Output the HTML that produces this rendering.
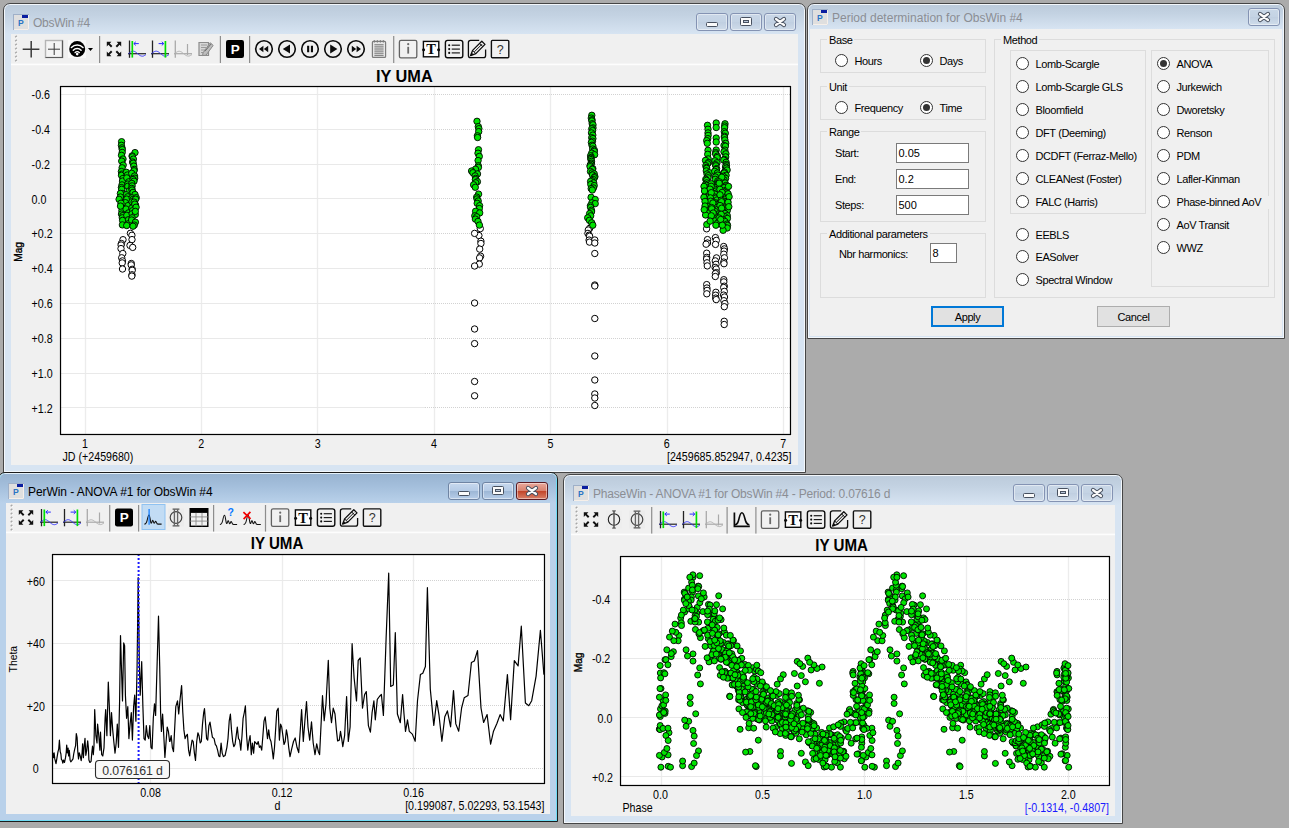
<!DOCTYPE html>
<html lang="en"><head><meta charset="utf-8"><title>Peranso - IY UMA</title>
<style>
html,body{margin:0;padding:0}
body{width:1289px;height:828px;overflow:hidden;background:#ababab;position:relative;font-family:"Liberation Sans",sans-serif;font-size:11px;color:#000}
.a{position:absolute;box-sizing:border-box}
.frame{position:absolute;box-sizing:border-box;border:1px solid #454545;border-radius:7px 7px 0 0}
.frame.in{background:#d7e4f2;box-shadow:inset 0 0 0 1px #f3f7fb}
.frame.ac{background:#b9d1ea;border-color:#1c1c1c;box-shadow:inset 0 1px 0 0 #e4f1fa,inset 0 0 0 1px #6fdcf5}
.cap{position:absolute;border-radius:5px 5px 0 0}
.cap.in{background:linear-gradient(#bccbdb 0%,#c3d2e2 35%,#d7e4f2 100%)}
.cap.ac{background:linear-gradient(#98b3d0 0%,#a3bedb 40%,#b9d1ea 100%)}
.client{position:absolute;background:#f0f0f0}
.title{position:absolute;font-size:12px;line-height:16px;white-space:nowrap;margin-top:1px}
.title.in{color:#8b8e94}
.title.ac{color:#000}
.tbsep{position:absolute;width:1px;background:#8e8e8e}
.tbline{position:absolute;height:1px;background:#fdfdfd}
svg{position:absolute;overflow:visible}
svg text{font-family:"Liberation Sans",sans-serif}
.gb{position:absolute;box-sizing:border-box;border:1px solid #dcdcdc}
.gl{position:absolute;background:#f0f0f0;padding:0 2px 0 2px;line-height:13px;font-size:11px;white-space:nowrap;letter-spacing:-0.4px;margin-top:1px}
.lb{position:absolute;line-height:13px;font-size:11px;white-space:nowrap;letter-spacing:-0.4px;margin-top:1px}
.rd{position:absolute;box-sizing:border-box;width:13px;height:13px;border-radius:50%;border:1px solid #333;background:#fff}
.rd.on::after{content:"";position:absolute;left:2px;top:2px;width:7px;height:7px;border-radius:50%;background:#333}
.inp{position:absolute;box-sizing:border-box;height:20px;border:1px solid #7a7a7a;background:#fff;font-size:11px;line-height:18px;padding-left:1.5px}
.btn{position:absolute;box-sizing:border-box;height:21px;border:1px solid #adadad;background:#e1e1e1;text-align:center;font-size:11px;line-height:21px;letter-spacing:-0.4px}
.btn.def{border:2px solid #0078d7;line-height:19px}
</style></head><body>
<div class="frame in" style="left:3px;top:3px;width:803px;height:470px"></div><div class="cap in" style="left:5px;top:5px;width:799px;height:29px"></div><div class="client" style="left:11px;top:34px;width:787px;height:431px"></div><svg style="left:13px;top:14px" width="16" height="16" viewBox="0 0 16 16"><rect x="0.5" y="0.5" width="15" height="15" fill="#dfdfdf" stroke="#9fb0c8" stroke-width="1"/><path d="M15.5 1v14.5H1" fill="none" stroke="#f6efe9" stroke-width="1"/><rect x="9" y="1" width="6" height="3" fill="#0a1ea0"/><text x="5" y="12" font-size="8.6" font-weight="bold" fill="#2a74c4">P</text></svg><div class="title in" style="left:33px;top:14px;letter-spacing:-0.27px">ObsWin #4</div><div class="a" style="left:696px;top:13px;width:32px;height:18px;border:1px solid #8493b3;border-radius:3px;background:linear-gradient(#c9d7e7 0%,#c4d3e4 48%,#c0cfe1 52%,#cfdcea 100%);box-shadow:inset 0 0 0 1px rgba(255,255,255,.45)"></div><svg style="left:696px;top:13px" width="32" height="18"><rect x="10.5" y="9.5" width="11" height="4" rx="1" fill="#fbfbfb" stroke="#47505f" stroke-width="1"/></svg><div class="a" style="left:730px;top:13px;width:32px;height:18px;border:1px solid #8493b3;border-radius:3px;background:linear-gradient(#c9d7e7 0%,#c4d3e4 48%,#c0cfe1 52%,#cfdcea 100%);box-shadow:inset 0 0 0 1px rgba(255,255,255,.45)"></div><svg style="left:730px;top:13px" width="32" height="18"><rect x="10.5" y="4.5" width="11" height="8" rx="1" fill="#fbfbfb" stroke="#47505f" stroke-width="1"/><rect x="13.5" y="7.5" width="5" height="2" fill="#b9c7da" stroke="#47505f" stroke-width="1"/></svg><div class="a" style="left:764px;top:13px;width:32px;height:18px;border:1px solid #8493b3;border-radius:3px;background:linear-gradient(#c9d7e7 0%,#c4d3e4 48%,#c0cfe1 52%,#cfdcea 100%);box-shadow:inset 0 0 0 1px rgba(255,255,255,.45)"></div><svg style="left:764px;top:13px" width="32" height="18"><path d="M12.0 6.0L20.0 12.0M20.0 6.0L12.0 12.0" stroke="#47505f" stroke-width="4.2" stroke-linecap="round"/><path d="M12.0 6.0L20.0 12.0M20.0 6.0L12.0 12.0" stroke="#fbfbfb" stroke-width="2.2" stroke-linecap="round"/></svg>
<svg style="left:0;top:0" width="1289" height="828" viewBox="0 0 1289 828"><path d="M15.2 37.3L16.8 35.7" stroke="#a6a6a6" stroke-width="1.3"/><path d="M16.2 38.3L17.8 36.7" stroke="#fbfbfb" stroke-width="1"/><path d="M15.2 41.3L16.8 39.7" stroke="#a6a6a6" stroke-width="1.3"/><path d="M16.2 42.3L17.8 40.7" stroke="#fbfbfb" stroke-width="1"/><path d="M15.2 45.3L16.8 43.7" stroke="#a6a6a6" stroke-width="1.3"/><path d="M16.2 46.3L17.8 44.7" stroke="#fbfbfb" stroke-width="1"/><path d="M15.2 49.3L16.8 47.7" stroke="#a6a6a6" stroke-width="1.3"/><path d="M16.2 50.3L17.8 48.7" stroke="#fbfbfb" stroke-width="1"/><path d="M15.2 53.3L16.8 51.7" stroke="#a6a6a6" stroke-width="1.3"/><path d="M16.2 54.3L17.8 52.7" stroke="#fbfbfb" stroke-width="1"/><path d="M15.2 57.3L16.8 55.7" stroke="#a6a6a6" stroke-width="1.3"/><path d="M16.2 58.3L17.8 56.7" stroke="#fbfbfb" stroke-width="1"/><path d="M15.2 61.3L16.8 59.7" stroke="#a6a6a6" stroke-width="1.3"/><path d="M16.2 62.3L17.8 60.7" stroke="#fbfbfb" stroke-width="1"/><g transform="translate(31 49)"><path d="M-8.3 0.2H8.4M0.2 -8V8.4" stroke="#3a3a3a" stroke-width="1.5" fill="none"/></g><g transform="translate(54 49)"><rect x="-8.5" y="-8.5" width="17" height="17" fill="#f4f4f4" stroke="#b4b4b4" stroke-width="1.4"/><path d="M-8.5 8.5H8.5V-8.5" fill="none" stroke="#5a5a5a" stroke-width="1.2"/><path d="M-6 0.2H6M0.2 -6V6" stroke="#3a3a3a" stroke-width="1" fill="none"/></g><g transform="translate(77 49)"><rect x="-9" y="-9" width="18" height="18" fill="#f9f9f9"/><circle cx="0.2" cy="0.1" r="8" fill="#000"/><path d="M-5.6 -1.6A8 8 0 0 1 6 -1.6" fill="none" stroke="#fff" stroke-width="1.5" stroke-linecap="round"/><path d="M-3.7 1.2A5.4 5.4 0 0 1 4.1 1.2" fill="none" stroke="#fff" stroke-width="1.5" stroke-linecap="round"/><path d="M-1.9 3.6A2.8 2.8 0 0 1 2.3 3.6" fill="none" stroke="#fff" stroke-width="1.4" stroke-linecap="round"/><circle cx="0.2" cy="5.1" r="1.3" fill="#fff"/><path d="M11 -1H16L13.5 2Z" fill="#000"/></g><rect x="99.0" y="36" width="1.2" height="27" fill="#8d8d8d"/><g transform="translate(114 49)"><path transform="scale(1 1)" d="M-7.2 -7.2h4.6l-1.6 1.6 2.6 2.6-1.4 1.4-2.6-2.6-1.6 1.6z" fill="#111"/><path transform="scale(-1 1)" d="M-7.2 -7.2h4.6l-1.6 1.6 2.6 2.6-1.4 1.4-2.6-2.6-1.6 1.6z" fill="#111"/><path transform="scale(1 -1)" d="M-7.2 -7.2h4.6l-1.6 1.6 2.6 2.6-1.4 1.4-2.6-2.6-1.6 1.6z" fill="#111"/><path transform="scale(-1 -1)" d="M-7.2 -7.2h4.6l-1.6 1.6 2.6 2.6-1.4 1.4-2.6-2.6-1.6 1.6z" fill="#111"/></g><g transform="translate(137 49)"><path d="M-7.5 -8.5V8.8" stroke="#222" stroke-width="1.3"/><path d="M-9 4.7H9" stroke="#222" stroke-width="1.2"/><path d="M-8.5 4.7 L-7.8 4.1 L-7.0 3.5 L-6.3 3.0 L-5.6 2.6 L-4.9 2.3 L-4.1 2.2 L-3.4 2.2 L-2.7 2.4 L-1.9 2.7 L-1.2 3.2 L-0.5 3.7 L0.2 4.3 L1.0 4.9 L1.7 5.5 L2.4 6.1 L3.2 6.6 L3.9 6.9 L4.6 7.1 L5.4 7.2 L6.1 7.1 L6.8 6.9 L7.5 6.5 L8.3 6.0 L9.0 5.5" fill="none" stroke="#3030ff" stroke-width="0.9"/><path d="M-4.7 -8V8.6" stroke="#00e000" stroke-width="1.7"/><path d="M-3 -5.4H1.8M-3.2 -5.4L-1.2 -7.2M-3.2 -5.4L-1.2 -3.6" stroke="#2828ff" stroke-width="1" fill="none"/></g><g transform="translate(160 49)"><path d="M-7.5 -8.5V8.8" stroke="#222" stroke-width="1.3"/><path d="M-9 4.7H9" stroke="#222" stroke-width="1.2"/><path d="M-8.5 4.7 L-7.8 4.1 L-7.0 3.5 L-6.3 3.0 L-5.6 2.6 L-4.9 2.3 L-4.1 2.2 L-3.4 2.2 L-2.7 2.4 L-1.9 2.7 L-1.2 3.2 L-0.5 3.7 L0.2 4.3 L1.0 4.9 L1.7 5.5 L2.4 6.1 L3.2 6.6 L3.9 6.9 L4.6 7.1 L5.4 7.2 L6.1 7.1 L6.8 6.9 L7.5 6.5 L8.3 6.0 L9.0 5.5" fill="none" stroke="#3030ff" stroke-width="0.9"/><path d="M5.4 -8V8.6" stroke="#00e000" stroke-width="1.7"/><path d="M-1.4 -5.4H3.6M3.8 -5.4L1.8 -7.2M3.8 -5.4L1.8 -3.6" stroke="#2828ff" stroke-width="1" fill="none"/></g><g transform="translate(183 49)"><path d="M-7.7 -8.5V8.8" stroke="#a9a9a9" stroke-width="1.3"/><path d="M-9 4.7H9" stroke="#a9a9a9" stroke-width="1.2"/><path d="M-8.5 4.7 L-7.8 4.1 L-7.0 3.6 L-6.3 3.1 L-5.6 2.7 L-4.9 2.4 L-4.1 2.3 L-3.4 2.3 L-2.7 2.5 L-1.9 2.8 L-1.2 3.2 L-0.5 3.8 L0.2 4.3 L1.0 4.9 L1.7 5.5 L2.4 6.0 L3.2 6.5 L3.9 6.8 L4.6 7.0 L5.4 7.1 L6.1 7.0 L6.8 6.8 L7.5 6.4 L8.3 6.0 L9.0 5.4" fill="none" stroke="#b4b4b4" stroke-width="1"/><path d="M4.5 -5V6" stroke="#a9a9a9" stroke-width="1.2"/></g><g transform="translate(206 49)"><path d="M-7 -6.5H2.5V6.5H-7Z" fill="#d7d7d7" stroke="#8c8c8c" stroke-width="1.2"/><path d="M-5 -4H1M-5 -1.5H0M-5 1H-1M-5 3.5H1" stroke="#9a9a9a" stroke-width="1"/><path d="M-3 3.8L4.2 -6.2L7.2 -3.6L0 6.2L-3.4 6.6Z" fill="#bdbdbd" stroke="#8a8a8a" stroke-width="1"/><path d="M-1 2.2L5.2 -5.2" stroke="#6f6f6f" stroke-width="1"/></g><rect x="219.8" y="36" width="1.2" height="27" fill="#8d8d8d"/><g transform="translate(235 49)"><rect x="-9" y="-9" width="18" height="18" rx="2.2" fill="#000"/><text x="0.2" y="4.9" text-anchor="middle" font-size="13.5" font-weight="bold" fill="#fff">P</text></g><rect x="249.0" y="36" width="1.2" height="27" fill="#8d8d8d"/><g transform="translate(264 49)"><circle cx="0" cy="0" r="8.3" fill="none" stroke="#0c0c0c" stroke-width="1.6"/><path d="M-0.6 -3.2V3.2L-5 0ZM4.2 -3.2V3.2L-0.2 0Z" fill="#0c0c0c"/></g><g transform="translate(287 49)"><circle cx="0" cy="0" r="8.3" fill="none" stroke="#0c0c0c" stroke-width="1.6"/><path d="M3 -4.6V4.6L-4.2 0Z" fill="#0c0c0c"/></g><g transform="translate(310 49)"><circle cx="0" cy="0" r="8.3" fill="none" stroke="#0c0c0c" stroke-width="1.6"/><path d="M-2.9 -3.2h2.1v6.4h-2.1zM0.9 -3.2h2.1v6.4h-2.1z" fill="#0c0c0c"/></g><g transform="translate(333 49)"><circle cx="0" cy="0" r="8.3" fill="none" stroke="#0c0c0c" stroke-width="1.6"/><path d="M-2.8 -4.6V4.6L4.4 0Z" fill="#0c0c0c"/></g><g transform="translate(356 49)"><circle cx="0" cy="0" r="8.3" fill="none" stroke="#0c0c0c" stroke-width="1.6"/><path d="M0.6 -3.2V3.2L5 0ZM-4.2 -3.2V3.2L0.2 0Z" fill="#0c0c0c"/></g><g transform="translate(379 49)"><rect x="-6.6" y="-7.6" width="13.2" height="16" rx="1" fill="#e6e6e6" stroke="#7c7c7c" stroke-width="1.2"/><path d="M-4.6 -8.8V-6.6M-1.6 -8.8V-6.6M1.4 -8.8V-6.6M4.4 -8.8V-6.6" stroke="#7a7a7a" stroke-width="1.3"/><path d="M-4.6 -4.2H4.6" stroke="#6e6e6e" stroke-width="1"/><path d="M-4.6 -2.1H4.6" stroke="#6e6e6e" stroke-width="1"/><path d="M-4.6 0.0H4.6" stroke="#6e6e6e" stroke-width="1"/><path d="M-4.6 2.1H4.6" stroke="#6e6e6e" stroke-width="1"/><path d="M-4.6 4.2H4.6" stroke="#6e6e6e" stroke-width="1"/><path d="M-4.6 6.3H4.6" stroke="#6e6e6e" stroke-width="1"/></g><rect x="393.1" y="36" width="1.2" height="27" fill="#8d8d8d"/><g transform="translate(408 49)"><rect x="-8.6" y="-8.6" width="17.4" height="17.4" rx="1.6" fill="#f1f1f1" stroke="#626262" stroke-width="1.3"/><path d="M0.2 -2.2V4.6" stroke="#6a6a6a" stroke-width="1.8"/><circle cx="0.2" cy="-4.8" r="1.1" fill="#6a6a6a"/></g><g transform="translate(431 49)"><rect x="-7.6" y="-7.6" width="15.4" height="15.4" fill="#fdfdfd" stroke="#0a0a0a" stroke-width="1.4"/><text x="0.1" y="5" text-anchor="middle" font-size="14.5" font-weight="bold" fill="#0a0a0a" style="font-family:'Liberation Serif',serif">T</text><circle cx="-7.4" cy="0.7" r="1.5" fill="#0a0a0a"/><circle cx="7.6" cy="0.7" r="1.5" fill="#0a0a0a"/></g><g transform="translate(454 49)"><rect x="-8.6" y="-8.6" width="17.4" height="17.4" rx="2.2" fill="#f1f1f1" stroke="#0c0c0c" stroke-width="1.4"/><circle cx="-4.8" cy="-3.8" r="1.05" fill="#0c0c0c"/><path d="M-2.3 -3.8H5.9" stroke="#1c1c1c" stroke-width="1.2"/><circle cx="-4.8" cy="0.1" r="1.05" fill="#0c0c0c"/><path d="M-2.3 0.1H5.9" stroke="#1c1c1c" stroke-width="1.2"/><circle cx="-4.8" cy="3.9" r="1.05" fill="#0c0c0c"/><path d="M-2.3 3.9H5.9" stroke="#1c1c1c" stroke-width="1.2"/></g><g transform="translate(477 49)"><path d="M2.2 -8.6H-6.4Q-8.6 -8.6 -8.6 -6.4V6.4Q-8.6 8.6 -6.4 8.6H6.4Q8.6 8.6 8.6 6.4V0.6" fill="none" stroke="#0c0c0c" stroke-width="1.3"/><path d="M-6.4 6.6L-4.4 1.4L4.8 -7.8L8 -4.6L-1.2 4.6Z" fill="#f4f4f4" stroke="#0c0c0c" stroke-width="1.3" stroke-linejoin="round"/><path d="M2.6 -5.6L5.8 -2.4M-4.4 1.4L-1.2 4.6M-2.6 2.8L5 -4.8" stroke="#0c0c0c" stroke-width="1" fill="none"/><path d="M-6.6 6.8L-5.4 3.6L-3.4 5.6Z" fill="#0c0c0c"/></g><g transform="translate(500 49)"><rect x="-8.6" y="-8.6" width="17.4" height="17.4" rx="1" fill="#f1f1f1" stroke="#111" stroke-width="1.4"/><text x="0.2" y="4.6" text-anchor="middle" font-size="12.5" fill="#333">?</text></g><rect x="11" y="63.6" width="787" height="1.6" fill="#fdfdfd"/><text transform="translate(404.3 82) scale(1.02 1)" text-anchor="middle" font-size="16" font-weight="bold" fill="#000" >IY UMA</text><rect x="60" y="86" width="731" height="349" fill="#fff"/><rect x="84.85" y="86" width="1.3" height="348" fill="#ececec"/><rect x="200.85" y="86" width="1.3" height="348" fill="#ececec"/><rect x="316.85" y="86" width="1.3" height="348" fill="#ececec"/><rect x="433.85" y="86" width="1.3" height="348" fill="#ececec"/><rect x="549.85" y="86" width="1.3" height="348" fill="#ececec"/><rect x="666.85" y="86" width="1.3" height="348" fill="#ececec"/><rect x="782.85" y="86" width="1.3" height="348" fill="#ececec"/><rect x="60" y="94" width="365" height="1" fill="#e9e9e9"/><path d="M425 94.5H790" stroke="#d2d2d2" stroke-width="1" stroke-dasharray="1 1" fill="none"/><rect x="60" y="129" width="365" height="1" fill="#e9e9e9"/><path d="M425 129.5H790" stroke="#d2d2d2" stroke-width="1" stroke-dasharray="1 1" fill="none"/><rect x="60" y="164" width="365" height="1" fill="#e9e9e9"/><path d="M425 164.5H790" stroke="#d2d2d2" stroke-width="1" stroke-dasharray="1 1" fill="none"/><rect x="60" y="198" width="365" height="1" fill="#e9e9e9"/><path d="M425 198.5H790" stroke="#d2d2d2" stroke-width="1" stroke-dasharray="1 1" fill="none"/><rect x="60" y="233" width="365" height="1" fill="#e9e9e9"/><path d="M425 233.5H790" stroke="#d2d2d2" stroke-width="1" stroke-dasharray="1 1" fill="none"/><rect x="60" y="268" width="365" height="1" fill="#e9e9e9"/><path d="M425 268.5H790" stroke="#d2d2d2" stroke-width="1" stroke-dasharray="1 1" fill="none"/><rect x="60" y="303" width="365" height="1" fill="#e9e9e9"/><path d="M425 303.5H790" stroke="#d2d2d2" stroke-width="1" stroke-dasharray="1 1" fill="none"/><rect x="60" y="338" width="365" height="1" fill="#e9e9e9"/><path d="M425 338.5H790" stroke="#d2d2d2" stroke-width="1" stroke-dasharray="1 1" fill="none"/><rect x="60" y="373" width="365" height="1" fill="#e9e9e9"/><path d="M425 373.5H790" stroke="#d2d2d2" stroke-width="1" stroke-dasharray="1 1" fill="none"/><rect x="60" y="407" width="365" height="1" fill="#e9e9e9"/><path d="M425 407.5H790" stroke="#d2d2d2" stroke-width="1" stroke-dasharray="1 1" fill="none"/><g fill="#fff" stroke="#000" stroke-width="1"><circle cx="123.0" cy="239.7" r="3.2"/><circle cx="121.4" cy="243.5" r="3.2"/><circle cx="121.1" cy="245.0" r="3.2"/><circle cx="121.0" cy="248.6" r="3.2"/><circle cx="122.8" cy="253.5" r="3.2"/><circle cx="121.7" cy="257.8" r="3.2"/><circle cx="122.5" cy="260.9" r="3.2"/><circle cx="122.2" cy="262.9" r="3.2"/><circle cx="122.5" cy="269.0" r="3.2"/><circle cx="130.4" cy="233.3" r="3.2"/><circle cx="131.9" cy="235.3" r="3.2"/><circle cx="132.0" cy="239.6" r="3.2"/><circle cx="130.0" cy="245.4" r="3.2"/><circle cx="132.7" cy="247.4" r="3.2"/><circle cx="131.3" cy="263.5" r="3.2"/><circle cx="131.2" cy="264.9" r="3.2"/><circle cx="132.2" cy="269.3" r="3.2"/><circle cx="132.2" cy="270.3" r="3.2"/><circle cx="132.0" cy="274.8" r="3.2"/><circle cx="131.8" cy="276.1" r="3.2"/><circle cx="480.3" cy="228.6" r="3.2"/><circle cx="478.9" cy="235.5" r="3.2"/><circle cx="480.9" cy="241.2" r="3.2"/><circle cx="480.9" cy="243.5" r="3.2"/><circle cx="479.7" cy="249.1" r="3.2"/><circle cx="480.6" cy="256.2" r="3.2"/><circle cx="479.6" cy="257.9" r="3.2"/><circle cx="479.3" cy="264.1" r="3.2"/><circle cx="474.6" cy="233.4" r="3.2"/><circle cx="474.6" cy="266.0" r="3.2"/><circle cx="474.6" cy="303.0" r="3.2"/><circle cx="474.6" cy="329.0" r="3.2"/><circle cx="474.6" cy="343.6" r="3.2"/><circle cx="474.6" cy="381.5" r="3.2"/><circle cx="474.6" cy="395.8" r="3.2"/><circle cx="589.7" cy="228.3" r="3.2"/><circle cx="588.3" cy="230.0" r="3.2"/><circle cx="587.9" cy="233.4" r="3.2"/><circle cx="589.1" cy="235.2" r="3.2"/><circle cx="589.6" cy="236.2" r="3.2"/><circle cx="589.1" cy="240.1" r="3.2"/><circle cx="589.5" cy="242.1" r="3.2"/><circle cx="594.8" cy="240.0" r="3.2"/><circle cx="594.8" cy="243.0" r="3.2"/><circle cx="594.8" cy="253.5" r="3.2"/><circle cx="594.8" cy="285.0" r="3.2"/><circle cx="594.8" cy="286.0" r="3.2"/><circle cx="594.8" cy="318.5" r="3.2"/><circle cx="594.8" cy="356.0" r="3.2"/><circle cx="594.8" cy="380.0" r="3.2"/><circle cx="594.8" cy="394.0" r="3.2"/><circle cx="594.8" cy="398.0" r="3.2"/><circle cx="594.8" cy="405.5" r="3.2"/><circle cx="706.6" cy="228.8" r="3.2"/><circle cx="707.5" cy="239.6" r="3.2"/><circle cx="707.5" cy="243.0" r="3.2"/><circle cx="706.1" cy="244.2" r="3.2"/><circle cx="706.7" cy="253.2" r="3.2"/><circle cx="706.7" cy="257.4" r="3.2"/><circle cx="706.6" cy="259.1" r="3.2"/><circle cx="707.0" cy="262.8" r="3.2"/><circle cx="707.3" cy="265.9" r="3.2"/><circle cx="706.7" cy="284.6" r="3.2"/><circle cx="706.9" cy="288.0" r="3.2"/><circle cx="707.1" cy="290.4" r="3.2"/><circle cx="706.8" cy="293.8" r="3.2"/><circle cx="715.4" cy="237.6" r="3.2"/><circle cx="716.3" cy="240.4" r="3.2"/><circle cx="715.5" cy="244.4" r="3.2"/><circle cx="716.5" cy="257.9" r="3.2"/><circle cx="715.3" cy="260.9" r="3.2"/><circle cx="716.0" cy="264.3" r="3.2"/><circle cx="715.2" cy="267.4" r="3.2"/><circle cx="716.2" cy="269.0" r="3.2"/><circle cx="716.4" cy="272.6" r="3.2"/><circle cx="715.4" cy="273.6" r="3.2"/><circle cx="715.3" cy="276.5" r="3.2"/><circle cx="715.9" cy="292.3" r="3.2"/><circle cx="715.6" cy="295.2" r="3.2"/><circle cx="715.7" cy="298.1" r="3.2"/><circle cx="716.2" cy="299.6" r="3.2"/><circle cx="723.7" cy="246.5" r="3.2"/><circle cx="724.4" cy="248.9" r="3.2"/><circle cx="724.1" cy="251.1" r="3.2"/><circle cx="723.8" cy="254.2" r="3.2"/><circle cx="724.4" cy="257.8" r="3.2"/><circle cx="723.8" cy="262.1" r="3.2"/><circle cx="724.0" cy="263.7" r="3.2"/><circle cx="723.8" cy="279.7" r="3.2"/><circle cx="723.8" cy="281.9" r="3.2"/><circle cx="724.3" cy="286.2" r="3.2"/><circle cx="723.7" cy="287.5" r="3.2"/><circle cx="724.3" cy="291.4" r="3.2"/><circle cx="723.6" cy="295.1" r="3.2"/><circle cx="724.5" cy="297.0" r="3.2"/><circle cx="723.9" cy="300.7" r="3.2"/><circle cx="724.9" cy="303.6" r="3.2"/><circle cx="724.3" cy="306.7" r="3.2"/><circle cx="724.2" cy="321.3" r="3.2"/><circle cx="724.2" cy="324.5" r="3.2"/></g><g fill="#00e400" stroke="#000" stroke-width="0.9"><circle cx="121.6" cy="141.7" r="3.2"/><circle cx="121.4" cy="145.3" r="3.2"/><circle cx="122.0" cy="147.9" r="3.2"/><circle cx="122.3" cy="149.6" r="3.2"/><circle cx="122.2" cy="152.4" r="3.2"/><circle cx="121.5" cy="155.3" r="3.2"/><circle cx="123.0" cy="159.0" r="3.2"/><circle cx="121.7" cy="161.1" r="3.2"/><circle cx="123.2" cy="165.1" r="3.2"/><circle cx="122.1" cy="167.8" r="3.2"/><circle cx="121.4" cy="171.5" r="3.2"/><circle cx="121.9" cy="174.1" r="3.2"/><circle cx="121.5" cy="175.3" r="3.2"/><circle cx="122.9" cy="178.5" r="3.2"/><circle cx="122.5" cy="181.1" r="3.2"/><circle cx="122.0" cy="184.9" r="3.2"/><circle cx="121.4" cy="187.6" r="3.2"/><circle cx="121.7" cy="189.3" r="3.2"/><circle cx="122.2" cy="193.5" r="3.2"/><circle cx="122.5" cy="195.5" r="3.2"/><circle cx="121.9" cy="198.7" r="3.2"/><circle cx="122.7" cy="202.3" r="3.2"/><circle cx="122.4" cy="203.9" r="3.2"/><circle cx="123.1" cy="207.4" r="3.2"/><circle cx="121.9" cy="210.7" r="3.2"/><circle cx="121.5" cy="214.1" r="3.2"/><circle cx="122.8" cy="215.6" r="3.2"/><circle cx="122.3" cy="217.8" r="3.2"/><circle cx="122.6" cy="220.4" r="3.2"/><circle cx="122.4" cy="224.9" r="3.2"/><circle cx="126.3" cy="172.3" r="3.2"/><circle cx="127.4" cy="175.0" r="3.2"/><circle cx="126.8" cy="177.9" r="3.2"/><circle cx="128.8" cy="181.8" r="3.2"/><circle cx="127.7" cy="184.1" r="3.2"/><circle cx="127.8" cy="186.3" r="3.2"/><circle cx="129.0" cy="191.0" r="3.2"/><circle cx="126.1" cy="194.7" r="3.2"/><circle cx="127.7" cy="196.8" r="3.2"/><circle cx="126.8" cy="199.1" r="3.2"/><circle cx="125.5" cy="202.7" r="3.2"/><circle cx="128.1" cy="205.6" r="3.2"/><circle cx="126.0" cy="209.0" r="3.2"/><circle cx="128.5" cy="212.9" r="3.2"/><circle cx="126.8" cy="215.3" r="3.2"/><circle cx="128.5" cy="219.7" r="3.2"/><circle cx="128.5" cy="223.7" r="3.2"/><circle cx="126.7" cy="225.5" r="3.2"/><circle cx="135.0" cy="152.6" r="3.2"/><circle cx="132.1" cy="155.9" r="3.2"/><circle cx="132.4" cy="156.8" r="3.2"/><circle cx="133.4" cy="159.1" r="3.2"/><circle cx="132.6" cy="162.0" r="3.2"/><circle cx="133.2" cy="163.2" r="3.2"/><circle cx="133.8" cy="166.1" r="3.2"/><circle cx="134.3" cy="169.4" r="3.2"/><circle cx="134.0" cy="170.8" r="3.2"/><circle cx="131.7" cy="173.3" r="3.2"/><circle cx="134.6" cy="176.0" r="3.2"/><circle cx="134.7" cy="178.2" r="3.2"/><circle cx="133.1" cy="179.5" r="3.2"/><circle cx="134.0" cy="181.2" r="3.2"/><circle cx="131.8" cy="183.4" r="3.2"/><circle cx="132.1" cy="185.9" r="3.2"/><circle cx="131.7" cy="188.4" r="3.2"/><circle cx="132.1" cy="190.0" r="3.2"/><circle cx="133.0" cy="192.4" r="3.2"/><circle cx="135.0" cy="194.5" r="3.2"/><circle cx="132.1" cy="197.8" r="3.2"/><circle cx="132.9" cy="199.4" r="3.2"/><circle cx="132.0" cy="201.8" r="3.2"/><circle cx="135.5" cy="204.9" r="3.2"/><circle cx="133.4" cy="206.5" r="3.2"/><circle cx="131.9" cy="208.0" r="3.2"/><circle cx="132.6" cy="210.7" r="3.2"/><circle cx="132.1" cy="213.8" r="3.2"/><circle cx="135.3" cy="214.6" r="3.2"/><circle cx="132.1" cy="217.8" r="3.2"/><circle cx="131.6" cy="220.0" r="3.2"/><circle cx="135.4" cy="222.2" r="3.2"/><circle cx="134.3" cy="225.1" r="3.2"/><circle cx="133.0" cy="226.2" r="3.2"/><circle cx="120.4" cy="193.4" r="3.2"/><circle cx="120.4" cy="197.0" r="3.2"/><circle cx="119.1" cy="199.3" r="3.2"/><circle cx="121.0" cy="203.2" r="3.2"/><circle cx="120.5" cy="206.1" r="3.2"/><circle cx="136.2" cy="197.7" r="3.2"/><circle cx="135.6" cy="199.2" r="3.2"/><circle cx="134.1" cy="202.1" r="3.2"/><circle cx="134.8" cy="204.1" r="3.2"/><circle cx="136.1" cy="207.2" r="3.2"/><circle cx="135.3" cy="211.4" r="3.2"/><circle cx="477.0" cy="121.3" r="3.2"/><circle cx="478.3" cy="126.6" r="3.2"/><circle cx="478.9" cy="128.7" r="3.2"/><circle cx="478.7" cy="131.6" r="3.2"/><circle cx="477.4" cy="135.8" r="3.2"/><circle cx="477.6" cy="137.5" r="3.2"/><circle cx="478.5" cy="149.7" r="3.2"/><circle cx="478.0" cy="153.2" r="3.2"/><circle cx="479.3" cy="156.4" r="3.2"/><circle cx="478.1" cy="160.5" r="3.2"/><circle cx="478.3" cy="165.8" r="3.2"/><circle cx="478.4" cy="167.4" r="3.2"/><circle cx="475.5" cy="169.2" r="3.2"/><circle cx="471.6" cy="171.0" r="3.2"/><circle cx="472.9" cy="172.7" r="3.2"/><circle cx="477.5" cy="173.9" r="3.2"/><circle cx="475.1" cy="175.9" r="3.2"/><circle cx="475.7" cy="178.4" r="3.2"/><circle cx="475.4" cy="179.6" r="3.2"/><circle cx="477.4" cy="181.7" r="3.2"/><circle cx="475.7" cy="182.8" r="3.2"/><circle cx="473.6" cy="184.8" r="3.2"/><circle cx="475.3" cy="187.3" r="3.2"/><circle cx="478.6" cy="194.1" r="3.2"/><circle cx="476.7" cy="197.1" r="3.2"/><circle cx="477.0" cy="198.9" r="3.2"/><circle cx="478.2" cy="201.0" r="3.2"/><circle cx="477.2" cy="203.3" r="3.2"/><circle cx="479.6" cy="205.7" r="3.2"/><circle cx="479.3" cy="208.5" r="3.2"/><circle cx="475.6" cy="211.3" r="3.2"/><circle cx="479.7" cy="212.9" r="3.2"/><circle cx="474.8" cy="215.8" r="3.2"/><circle cx="476.7" cy="216.8" r="3.2"/><circle cx="475.4" cy="219.1" r="3.2"/><circle cx="478.0" cy="221.4" r="3.2"/><circle cx="479.4" cy="225.1" r="3.2"/><circle cx="591.8" cy="115.3" r="3.2"/><circle cx="591.3" cy="118.1" r="3.2"/><circle cx="592.0" cy="119.8" r="3.2"/><circle cx="591.9" cy="120.9" r="3.2"/><circle cx="592.2" cy="123.7" r="3.2"/><circle cx="593.0" cy="124.8" r="3.2"/><circle cx="593.0" cy="127.9" r="3.2"/><circle cx="591.8" cy="128.8" r="3.2"/><circle cx="592.6" cy="130.6" r="3.2"/><circle cx="591.5" cy="132.9" r="3.2"/><circle cx="592.8" cy="135.1" r="3.2"/><circle cx="591.7" cy="137.7" r="3.2"/><circle cx="592.9" cy="138.6" r="3.2"/><circle cx="592.5" cy="141.2" r="3.2"/><circle cx="591.4" cy="142.4" r="3.2"/><circle cx="592.0" cy="145.2" r="3.2"/><circle cx="592.9" cy="146.2" r="3.2"/><circle cx="592.7" cy="149.0" r="3.2"/><circle cx="594.3" cy="150.1" r="3.2"/><circle cx="594.3" cy="151.4" r="3.2"/><circle cx="591.7" cy="153.2" r="3.2"/><circle cx="594.6" cy="154.7" r="3.2"/><circle cx="590.6" cy="155.8" r="3.2"/><circle cx="591.2" cy="157.4" r="3.2"/><circle cx="590.8" cy="158.3" r="3.2"/><circle cx="591.0" cy="159.6" r="3.2"/><circle cx="591.5" cy="161.3" r="3.2"/><circle cx="591.4" cy="163.1" r="3.2"/><circle cx="590.9" cy="164.2" r="3.2"/><circle cx="590.1" cy="165.4" r="3.2"/><circle cx="590.1" cy="166.7" r="3.2"/><circle cx="592.8" cy="168.6" r="3.2"/><circle cx="592.4" cy="169.3" r="3.2"/><circle cx="590.5" cy="171.5" r="3.2"/><circle cx="592.2" cy="172.8" r="3.2"/><circle cx="594.2" cy="173.8" r="3.2"/><circle cx="592.5" cy="175.0" r="3.2"/><circle cx="594.9" cy="176.7" r="3.2"/><circle cx="594.2" cy="177.7" r="3.2"/><circle cx="593.2" cy="179.5" r="3.2"/><circle cx="591.7" cy="180.5" r="3.2"/><circle cx="590.6" cy="181.5" r="3.2"/><circle cx="593.7" cy="182.9" r="3.2"/><circle cx="590.8" cy="184.4" r="3.2"/><circle cx="594.2" cy="185.6" r="3.2"/><circle cx="593.4" cy="187.9" r="3.2"/><circle cx="591.2" cy="188.6" r="3.2"/><circle cx="592.3" cy="190.0" r="3.2"/><circle cx="591.1" cy="197.3" r="3.2"/><circle cx="595.2" cy="199.5" r="3.2"/><circle cx="591.9" cy="202.8" r="3.2"/><circle cx="595.2" cy="203.6" r="3.2"/><circle cx="590.4" cy="205.8" r="3.2"/><circle cx="590.6" cy="207.4" r="3.2"/><circle cx="591.5" cy="210.2" r="3.2"/><circle cx="591.5" cy="211.8" r="3.2"/><circle cx="589.6" cy="213.6" r="3.2"/><circle cx="590.7" cy="215.8" r="3.2"/><circle cx="587.7" cy="217.8" r="3.2"/><circle cx="589.4" cy="220.3" r="3.2"/><circle cx="591.7" cy="222.8" r="3.2"/><circle cx="592.8" cy="225.2" r="3.2"/><circle cx="707.5" cy="125.3" r="3.2"/><circle cx="708.0" cy="129.2" r="3.2"/><circle cx="708.0" cy="132.9" r="3.2"/><circle cx="708.1" cy="135.4" r="3.2"/><circle cx="707.8" cy="138.6" r="3.2"/><circle cx="706.7" cy="140.6" r="3.2"/><circle cx="707.3" cy="143.3" r="3.2"/><circle cx="708.0" cy="150.3" r="3.2"/><circle cx="707.7" cy="154.3" r="3.2"/><circle cx="708.2" cy="158.9" r="3.2"/><circle cx="705.5" cy="160.4" r="3.2"/><circle cx="708.5" cy="162.5" r="3.2"/><circle cx="707.6" cy="163.8" r="3.2"/><circle cx="705.8" cy="165.7" r="3.2"/><circle cx="706.5" cy="167.5" r="3.2"/><circle cx="706.6" cy="168.3" r="3.2"/><circle cx="706.3" cy="170.9" r="3.2"/><circle cx="709.4" cy="172.7" r="3.2"/><circle cx="707.0" cy="174.0" r="3.2"/><circle cx="708.2" cy="175.7" r="3.2"/><circle cx="708.0" cy="177.8" r="3.2"/><circle cx="705.8" cy="179.3" r="3.2"/><circle cx="706.5" cy="180.4" r="3.2"/><circle cx="706.7" cy="182.9" r="3.2"/><circle cx="705.5" cy="184.4" r="3.2"/><circle cx="706.6" cy="185.4" r="3.2"/><circle cx="708.3" cy="187.9" r="3.2"/><circle cx="706.7" cy="189.6" r="3.2"/><circle cx="707.4" cy="191.1" r="3.2"/><circle cx="706.0" cy="192.8" r="3.2"/><circle cx="706.3" cy="195.0" r="3.2"/><circle cx="709.2" cy="196.9" r="3.2"/><circle cx="707.3" cy="197.3" r="3.2"/><circle cx="709.4" cy="200.1" r="3.2"/><circle cx="706.6" cy="201.3" r="3.2"/><circle cx="709.3" cy="202.6" r="3.2"/><circle cx="707.8" cy="204.3" r="3.2"/><circle cx="707.6" cy="206.0" r="3.2"/><circle cx="706.0" cy="208.8" r="3.2"/><circle cx="707.5" cy="210.3" r="3.2"/><circle cx="708.3" cy="212.1" r="3.2"/><circle cx="709.1" cy="212.9" r="3.2"/><circle cx="705.6" cy="215.0" r="3.2"/><circle cx="706.8" cy="224.5" r="3.2"/><circle cx="716.2" cy="123.0" r="3.2"/><circle cx="716.2" cy="127.5" r="3.2"/><circle cx="716.2" cy="138.0" r="3.2"/><circle cx="716.2" cy="142.0" r="3.2"/><circle cx="716.2" cy="150.0" r="3.2"/><circle cx="715.6" cy="152.6" r="3.2"/><circle cx="715.7" cy="154.0" r="3.2"/><circle cx="717.4" cy="156.2" r="3.2"/><circle cx="717.1" cy="157.6" r="3.2"/><circle cx="714.9" cy="160.8" r="3.2"/><circle cx="717.0" cy="162.8" r="3.2"/><circle cx="715.5" cy="164.7" r="3.2"/><circle cx="715.9" cy="165.8" r="3.2"/><circle cx="716.6" cy="168.6" r="3.2"/><circle cx="716.0" cy="169.5" r="3.2"/><circle cx="714.7" cy="171.3" r="3.2"/><circle cx="717.4" cy="173.0" r="3.2"/><circle cx="717.8" cy="175.1" r="3.2"/><circle cx="715.4" cy="177.0" r="3.2"/><circle cx="715.2" cy="179.3" r="3.2"/><circle cx="717.8" cy="181.0" r="3.2"/><circle cx="717.3" cy="183.6" r="3.2"/><circle cx="717.7" cy="185.2" r="3.2"/><circle cx="716.4" cy="187.5" r="3.2"/><circle cx="714.7" cy="189.1" r="3.2"/><circle cx="716.1" cy="191.0" r="3.2"/><circle cx="716.8" cy="192.9" r="3.2"/><circle cx="714.7" cy="194.1" r="3.2"/><circle cx="714.9" cy="197.0" r="3.2"/><circle cx="715.7" cy="198.2" r="3.2"/><circle cx="717.1" cy="199.9" r="3.2"/><circle cx="715.4" cy="202.8" r="3.2"/><circle cx="715.6" cy="204.2" r="3.2"/><circle cx="715.9" cy="205.9" r="3.2"/><circle cx="715.1" cy="207.3" r="3.2"/><circle cx="717.7" cy="209.2" r="3.2"/><circle cx="715.3" cy="211.6" r="3.2"/><circle cx="718.0" cy="214.1" r="3.2"/><circle cx="715.0" cy="215.3" r="3.2"/><circle cx="714.8" cy="216.8" r="3.2"/><circle cx="714.8" cy="218.9" r="3.2"/><circle cx="715.4" cy="220.7" r="3.2"/><circle cx="717.6" cy="223.1" r="3.2"/><circle cx="715.9" cy="225.2" r="3.2"/><circle cx="725.0" cy="123.8" r="3.2"/><circle cx="724.7" cy="126.0" r="3.2"/><circle cx="724.6" cy="127.7" r="3.2"/><circle cx="724.3" cy="131.7" r="3.2"/><circle cx="725.3" cy="133.2" r="3.2"/><circle cx="724.4" cy="136.2" r="3.2"/><circle cx="724.5" cy="137.4" r="3.2"/><circle cx="724.9" cy="139.9" r="3.2"/><circle cx="725.7" cy="143.3" r="3.2"/><circle cx="724.0" cy="145.4" r="3.2"/><circle cx="725.4" cy="146.2" r="3.2"/><circle cx="724.9" cy="150.1" r="3.2"/><circle cx="724.0" cy="151.8" r="3.2"/><circle cx="725.9" cy="153.8" r="3.2"/><circle cx="725.7" cy="156.9" r="3.2"/><circle cx="724.5" cy="159.5" r="3.2"/><circle cx="723.7" cy="160.1" r="3.2"/><circle cx="726.1" cy="162.3" r="3.2"/><circle cx="726.2" cy="164.4" r="3.2"/><circle cx="726.4" cy="165.7" r="3.2"/><circle cx="725.5" cy="167.0" r="3.2"/><circle cx="726.5" cy="168.1" r="3.2"/><circle cx="727.1" cy="170.0" r="3.2"/><circle cx="724.4" cy="172.1" r="3.2"/><circle cx="724.1" cy="173.1" r="3.2"/><circle cx="726.1" cy="175.3" r="3.2"/><circle cx="723.3" cy="176.3" r="3.2"/><circle cx="725.6" cy="178.4" r="3.2"/><circle cx="724.0" cy="179.9" r="3.2"/><circle cx="723.0" cy="181.8" r="3.2"/><circle cx="725.1" cy="183.0" r="3.2"/><circle cx="725.9" cy="185.4" r="3.2"/><circle cx="725.1" cy="187.0" r="3.2"/><circle cx="724.1" cy="187.7" r="3.2"/><circle cx="726.2" cy="190.3" r="3.2"/><circle cx="723.1" cy="191.1" r="3.2"/><circle cx="726.0" cy="192.9" r="3.2"/><circle cx="724.2" cy="194.4" r="3.2"/><circle cx="727.2" cy="196.4" r="3.2"/><circle cx="723.2" cy="197.4" r="3.2"/><circle cx="724.9" cy="199.2" r="3.2"/><circle cx="723.9" cy="201.2" r="3.2"/><circle cx="726.3" cy="203.0" r="3.2"/><circle cx="723.9" cy="204.2" r="3.2"/><circle cx="724.4" cy="206.4" r="3.2"/><circle cx="724.0" cy="207.9" r="3.2"/><circle cx="726.4" cy="208.7" r="3.2"/><circle cx="727.3" cy="210.4" r="3.2"/><circle cx="723.8" cy="212.3" r="3.2"/><circle cx="724.9" cy="213.5" r="3.2"/><circle cx="727.3" cy="215.7" r="3.2"/><circle cx="724.8" cy="216.7" r="3.2"/><circle cx="727.4" cy="218.4" r="3.2"/><circle cx="723.2" cy="219.9" r="3.2"/><circle cx="724.8" cy="221.4" r="3.2"/><circle cx="727.0" cy="224.1" r="3.2"/><circle cx="727.5" cy="225.5" r="3.2"/><circle cx="724.5" cy="227.4" r="3.2"/><circle cx="727.2" cy="228.0" r="3.2"/><circle cx="723.1" cy="230.3" r="3.2"/><circle cx="711.3" cy="183.8" r="3.2"/><circle cx="711.2" cy="186.3" r="3.2"/><circle cx="710.0" cy="189.1" r="3.2"/><circle cx="711.2" cy="192.7" r="3.2"/><circle cx="710.4" cy="197.9" r="3.2"/><circle cx="710.7" cy="201.2" r="3.2"/><circle cx="712.9" cy="203.0" r="3.2"/><circle cx="711.5" cy="207.5" r="3.2"/><circle cx="711.7" cy="208.8" r="3.2"/><circle cx="713.2" cy="213.0" r="3.2"/><circle cx="711.3" cy="215.8" r="3.2"/><circle cx="710.1" cy="221.1" r="3.2"/><circle cx="721.8" cy="177.2" r="3.2"/><circle cx="719.1" cy="181.8" r="3.2"/><circle cx="719.2" cy="183.2" r="3.2"/><circle cx="719.9" cy="189.3" r="3.2"/><circle cx="722.1" cy="192.4" r="3.2"/><circle cx="720.0" cy="194.8" r="3.2"/><circle cx="721.2" cy="200.2" r="3.2"/><circle cx="721.5" cy="201.7" r="3.2"/><circle cx="720.0" cy="205.5" r="3.2"/><circle cx="721.6" cy="208.2" r="3.2"/><circle cx="721.2" cy="214.3" r="3.2"/><circle cx="719.1" cy="218.0" r="3.2"/><circle cx="720.7" cy="219.5" r="3.2"/><circle cx="722.3" cy="225.2" r="3.2"/><circle cx="704.0" cy="186.4" r="3.2"/><circle cx="704.5" cy="191.0" r="3.2"/><circle cx="703.9" cy="197.3" r="3.2"/><circle cx="705.0" cy="201.4" r="3.2"/><circle cx="705.0" cy="206.0" r="3.2"/><circle cx="704.2" cy="209.7" r="3.2"/><circle cx="728.5" cy="186.4" r="3.2"/><circle cx="728.1" cy="193.8" r="3.2"/><circle cx="729.1" cy="196.7" r="3.2"/><circle cx="728.1" cy="202.3" r="3.2"/><circle cx="728.8" cy="206.7" r="3.2"/></g><rect x="59.5" y="85.5" width="732" height="350" fill="none" stroke="#fafafa" stroke-width="1"/><rect x="60.5" y="86.5" width="730" height="348" fill="none" stroke="#000" stroke-width="1.25"/><text transform="translate(31.6 99.1) scale(0.89 1)" text-anchor="start" font-size="12" font-weight="normal" fill="#000" >-0.6</text><text transform="translate(31.6 133.92999999999998) scale(0.89 1)" text-anchor="start" font-size="12" font-weight="normal" fill="#000" >-0.4</text><text transform="translate(31.6 168.76) scale(0.89 1)" text-anchor="start" font-size="12" font-weight="normal" fill="#000" >-0.2</text><text transform="translate(31.6 203.59) scale(0.89 1)" text-anchor="start" font-size="12" font-weight="normal" fill="#000" >0.0</text><text transform="translate(31.6 238.42) scale(0.89 1)" text-anchor="start" font-size="12" font-weight="normal" fill="#000" >+0.2</text><text transform="translate(31.6 273.25) scale(0.89 1)" text-anchor="start" font-size="12" font-weight="normal" fill="#000" >+0.4</text><text transform="translate(31.6 308.08000000000004) scale(0.89 1)" text-anchor="start" font-size="12" font-weight="normal" fill="#000" >+0.6</text><text transform="translate(31.6 342.91) scale(0.89 1)" text-anchor="start" font-size="12" font-weight="normal" fill="#000" >+0.8</text><text transform="translate(31.6 377.74) scale(0.89 1)" text-anchor="start" font-size="12" font-weight="normal" fill="#000" >+1.0</text><text transform="translate(31.6 412.57) scale(0.89 1)" text-anchor="start" font-size="12" font-weight="normal" fill="#000" >+1.2</text><text transform="translate(84.9 448) scale(0.89 1)" text-anchor="middle" font-size="12" font-weight="normal" fill="#000" >1</text><text transform="translate(201.27999999999997 448) scale(0.89 1)" text-anchor="middle" font-size="12" font-weight="normal" fill="#000" >2</text><text transform="translate(317.65999999999997 448) scale(0.89 1)" text-anchor="middle" font-size="12" font-weight="normal" fill="#000" >3</text><text transform="translate(434.03999999999996 448) scale(0.89 1)" text-anchor="middle" font-size="12" font-weight="normal" fill="#000" >4</text><text transform="translate(550.4200000000001 448) scale(0.89 1)" text-anchor="middle" font-size="12" font-weight="normal" fill="#000" >5</text><text transform="translate(666.8000000000001 448) scale(0.89 1)" text-anchor="middle" font-size="12" font-weight="normal" fill="#000" >6</text><text transform="translate(783.1800000000001 448) scale(0.89 1)" text-anchor="middle" font-size="12" font-weight="normal" fill="#000" >7</text><text transform="translate(62.5 461) scale(0.89 1)" text-anchor="start" font-size="12" font-weight="normal" fill="#000" >JD (+2459680)</text><text transform="translate(791.5 461) scale(0.89 1)" text-anchor="end" font-size="12" font-weight="normal" fill="#000" >[2459685.852947, 0.4235]</text><text transform="translate(22 261.8) rotate(-90)" font-size="10.2" stroke="#000" stroke-width="0.35">Mag</text></svg>
<div class="frame in" style="left:807px;top:3px;width:478px;height:336px"></div><div class="cap in" style="left:809px;top:5px;width:474px;height:24px"></div><div class="client" style="left:810px;top:29px;width:472px;height:307px"></div><svg style="left:812px;top:9px" width="16" height="16" viewBox="0 0 16 16"><rect x="0.5" y="0.5" width="15" height="15" fill="#dfdfdf" stroke="#9fb0c8" stroke-width="1"/><path d="M15.5 1v14.5H1" fill="none" stroke="#f6efe9" stroke-width="1"/><rect x="9" y="1" width="6" height="3" fill="#0a1ea0"/><text x="5" y="12" font-size="8.6" font-weight="bold" fill="#2a74c4">P</text></svg><div class="title in" style="left:832px;top:9px">Period determination for ObsWin #4</div><div class="a" style="left:1248px;top:8px;width:32px;height:18px;border:1px solid #8493b3;border-radius:3px;background:linear-gradient(#c9d7e7 0%,#c4d3e4 48%,#c0cfe1 52%,#cfdcea 100%);box-shadow:inset 0 0 0 1px rgba(255,255,255,.45)"></div><svg style="left:1248px;top:8px" width="32" height="18"><path d="M12.0 6.0L20.0 12.0M20.0 6.0L12.0 12.0" stroke="#47505f" stroke-width="4.2" stroke-linecap="round"/><path d="M12.0 6.0L20.0 12.0M20.0 6.0L12.0 12.0" stroke="#fbfbfb" stroke-width="2.2" stroke-linecap="round"/></svg><div class="gb" style="left:820px;top:39px;width:166px;height:34px"></div><div class="gl" style="left:827px;top:33px">Base</div><div class="rd" style="left:835.0px;top:54.0px"></div><div class="lb" style="left:854.5px;top:54.0px;">Hours</div><div class="rd on" style="left:920.0px;top:54.0px"></div><div class="lb" style="left:939.5px;top:54.0px;">Days</div><div class="gb" style="left:820px;top:86px;width:166px;height:34px"></div><div class="gl" style="left:827px;top:80px">Unit</div><div class="rd" style="left:835.0px;top:101.0px"></div><div class="lb" style="left:854.5px;top:101.0px;">Frequency</div><div class="rd on" style="left:920.0px;top:101.0px"></div><div class="lb" style="left:939.5px;top:101.0px;">Time</div><div class="gb" style="left:820px;top:131px;width:166px;height:91px"></div><div class="gl" style="left:827px;top:125px">Range</div><div class="lb" style="left:835px;top:146px">Start:</div><div class="inp" style="left:896px;top:143px;width:73px">0.05</div><div class="lb" style="left:835px;top:172px">End:</div><div class="inp" style="left:896px;top:169px;width:73px">0.2</div><div class="lb" style="left:835px;top:198px">Steps:</div><div class="inp" style="left:896px;top:195px;width:73px">500</div><div class="gb" style="left:820px;top:233px;width:166px;height:65px"></div><div class="gl" style="left:827px;top:227px">Additional parameters</div><div class="lb" style="left:839px;top:247px">Nbr harmonics:</div><div class="inp" style="left:930px;top:243px;width:27px">8</div><div class="gb" style="left:994px;top:39px;width:281px;height:259px"></div><div class="gl" style="left:1001px;top:33px">Method</div><div class="gb" style="left:1010px;top:50px;width:136px;height:164px"></div><div class="gb" style="left:1151px;top:50px;width:118px;height:237px"></div><div class="rd" style="left:1016.0px;top:57.0px"></div><div class="lb" style="left:1035.5px;top:57.0px;">Lomb-Scargle</div><div class="rd" style="left:1016.0px;top:80.0px"></div><div class="lb" style="left:1035.5px;top:80.0px;">Lomb-Scargle GLS</div><div class="rd" style="left:1016.0px;top:103.0px"></div><div class="lb" style="left:1035.5px;top:103.0px;">Bloomfield</div><div class="rd" style="left:1016.0px;top:126.0px"></div><div class="lb" style="left:1035.5px;top:126.0px;">DFT (Deeming)</div><div class="rd" style="left:1016.0px;top:149.0px"></div><div class="lb" style="left:1035.5px;top:149.0px;">DCDFT (Ferraz-Mello)</div><div class="rd" style="left:1016.0px;top:172.0px"></div><div class="lb" style="left:1035.5px;top:172.0px;">CLEANest (Foster)</div><div class="rd" style="left:1016.0px;top:195.0px"></div><div class="lb" style="left:1035.5px;top:195.0px;">FALC (Harris)</div><div class="rd" style="left:1016.0px;top:228.0px"></div><div class="lb" style="left:1035.5px;top:228.0px;">EEBLS</div><div class="rd" style="left:1016.0px;top:250.0px"></div><div class="lb" style="left:1035.5px;top:250.0px;">EASolver</div><div class="rd" style="left:1016.0px;top:273.0px"></div><div class="lb" style="left:1035.5px;top:273.0px;">Spectral Window</div><div class="rd on" style="left:1157.0px;top:57.0px"></div><div class="lb" style="left:1176.5px;top:57.0px;">ANOVA</div><div class="rd" style="left:1157.0px;top:80.0px"></div><div class="lb" style="left:1176.5px;top:80.0px;">Jurkewich</div><div class="rd" style="left:1157.0px;top:103.0px"></div><div class="lb" style="left:1176.5px;top:103.0px;">Dworetsky</div><div class="rd" style="left:1157.0px;top:126.0px"></div><div class="lb" style="left:1176.5px;top:126.0px;">Renson</div><div class="rd" style="left:1157.0px;top:149.0px"></div><div class="lb" style="left:1176.5px;top:149.0px;">PDM</div><div class="rd" style="left:1157.0px;top:172.0px"></div><div class="lb" style="left:1176.5px;top:172.0px;">Lafler-Kinman</div><div class="rd" style="left:1157.0px;top:195.0px"></div><div class="lb" style="left:1176.5px;top:195.0px;background:#f0f0f0;padding-right:9px;">Phase-binned AoV</div><div class="rd" style="left:1157.0px;top:218.0px"></div><div class="lb" style="left:1176.5px;top:218.0px;">AoV Transit</div><div class="rd" style="left:1157.0px;top:241.0px"></div><div class="lb" style="left:1176.5px;top:241.0px;">WWZ</div><div class="btn def" style="left:931px;top:306px;width:73px">Apply</div><div class="btn" style="left:1097px;top:306px;width:73px">Cancel</div>
<div class="frame ac" style="left:-2px;top:472px;width:560px;height:350px"></div><div class="cap ac" style="left:0px;top:474px;width:556px;height:29px"></div><div class="client" style="left:6px;top:503px;width:544px;height:311px"></div><svg style="left:8px;top:483px" width="16" height="16" viewBox="0 0 16 16"><rect x="0.5" y="0.5" width="15" height="15" fill="#dfdfdf" stroke="#9fb0c8" stroke-width="1"/><path d="M15.5 1v14.5H1" fill="none" stroke="#f6efe9" stroke-width="1"/><rect x="9" y="1" width="6" height="3" fill="#0a1ea0"/><text x="5" y="12" font-size="8.6" font-weight="bold" fill="#2a74c4">P</text></svg><div class="title ac" style="left:28px;top:483px;letter-spacing:-0.065px">PerWin - ANOVA #1 for ObsWin #4</div><div class="a" style="left:448px;top:482px;width:32px;height:18px;border:1px solid #6f84a3;border-radius:3px;background:linear-gradient(#c7d8ee 0%,#b5cbe6 48%,#9db7d6 52%,#b7cde8 100%);box-shadow:inset 0 0 0 1px rgba(255,255,255,.45)"></div><svg style="left:448px;top:482px" width="32" height="18"><rect x="10.5" y="9.5" width="11" height="4" rx="1" fill="#fbfbfb" stroke="#47505f" stroke-width="1"/></svg><div class="a" style="left:482px;top:482px;width:32px;height:18px;border:1px solid #6f84a3;border-radius:3px;background:linear-gradient(#c7d8ee 0%,#b5cbe6 48%,#9db7d6 52%,#b7cde8 100%);box-shadow:inset 0 0 0 1px rgba(255,255,255,.45)"></div><svg style="left:482px;top:482px" width="32" height="18"><rect x="10.5" y="4.5" width="11" height="8" rx="1" fill="#fbfbfb" stroke="#47505f" stroke-width="1"/><rect x="13.5" y="7.5" width="5" height="2" fill="#b9c7da" stroke="#47505f" stroke-width="1"/></svg><div class="a" style="left:516px;top:482px;width:32px;height:18px;border:1px solid #5a1a22;border-radius:3px;background:linear-gradient(#e9a99c 0%,#d9826f 48%,#c2452a 52%,#d98068 100%);box-shadow:inset 0 0 0 1px rgba(255,255,255,.45)"></div><svg style="left:516px;top:482px" width="32" height="18"><path d="M12.0 6.0L20.0 12.0M20.0 6.0L12.0 12.0" stroke="#47505f" stroke-width="4.2" stroke-linecap="round"/><path d="M12.0 6.0L20.0 12.0M20.0 6.0L12.0 12.0" stroke="#fbfbfb" stroke-width="2.2" stroke-linecap="round"/></svg><svg style="left:0;top:0" width="1289" height="828" viewBox="0 0 1289 828"><path d="M10.7 506.3L12.3 504.7" stroke="#a6a6a6" stroke-width="1.3"/><path d="M11.7 507.3L13.3 505.7" stroke="#fbfbfb" stroke-width="1"/><path d="M10.7 510.3L12.3 508.7" stroke="#a6a6a6" stroke-width="1.3"/><path d="M11.7 511.3L13.3 509.7" stroke="#fbfbfb" stroke-width="1"/><path d="M10.7 514.3L12.3 512.7" stroke="#a6a6a6" stroke-width="1.3"/><path d="M11.7 515.3L13.3 513.7" stroke="#fbfbfb" stroke-width="1"/><path d="M10.7 518.3L12.3 516.7" stroke="#a6a6a6" stroke-width="1.3"/><path d="M11.7 519.3L13.3 517.7" stroke="#fbfbfb" stroke-width="1"/><path d="M10.7 522.3L12.3 520.7" stroke="#a6a6a6" stroke-width="1.3"/><path d="M11.7 523.3L13.3 521.7" stroke="#fbfbfb" stroke-width="1"/><path d="M10.7 526.3L12.3 524.7" stroke="#a6a6a6" stroke-width="1.3"/><path d="M11.7 527.3L13.3 525.7" stroke="#fbfbfb" stroke-width="1"/><path d="M10.7 530.3L12.3 528.7" stroke="#a6a6a6" stroke-width="1.3"/><path d="M11.7 531.3L13.3 529.7" stroke="#fbfbfb" stroke-width="1"/><g transform="translate(26 517.5)"><path transform="scale(1 1)" d="M-7.2 -7.2h4.6l-1.6 1.6 2.6 2.6-1.4 1.4-2.6-2.6-1.6 1.6z" fill="#111"/><path transform="scale(-1 1)" d="M-7.2 -7.2h4.6l-1.6 1.6 2.6 2.6-1.4 1.4-2.6-2.6-1.6 1.6z" fill="#111"/><path transform="scale(1 -1)" d="M-7.2 -7.2h4.6l-1.6 1.6 2.6 2.6-1.4 1.4-2.6-2.6-1.6 1.6z" fill="#111"/><path transform="scale(-1 -1)" d="M-7.2 -7.2h4.6l-1.6 1.6 2.6 2.6-1.4 1.4-2.6-2.6-1.6 1.6z" fill="#111"/></g><g transform="translate(49 517.5)"><path d="M-7.5 -8.5V8.8" stroke="#222" stroke-width="1.3"/><path d="M-9 4.7H9" stroke="#222" stroke-width="1.2"/><path d="M-8.5 4.7 L-7.8 4.1 L-7.0 3.5 L-6.3 3.0 L-5.6 2.6 L-4.9 2.3 L-4.1 2.2 L-3.4 2.2 L-2.7 2.4 L-1.9 2.7 L-1.2 3.2 L-0.5 3.7 L0.2 4.3 L1.0 4.9 L1.7 5.5 L2.4 6.1 L3.2 6.6 L3.9 6.9 L4.6 7.1 L5.4 7.2 L6.1 7.1 L6.8 6.9 L7.5 6.5 L8.3 6.0 L9.0 5.5" fill="none" stroke="#3030ff" stroke-width="0.9"/><path d="M-4.7 -8V8.6" stroke="#00e000" stroke-width="1.7"/><path d="M-3 -5.4H1.8M-3.2 -5.4L-1.2 -7.2M-3.2 -5.4L-1.2 -3.6" stroke="#2828ff" stroke-width="1" fill="none"/></g><g transform="translate(72 517.5)"><path d="M-7.5 -8.5V8.8" stroke="#222" stroke-width="1.3"/><path d="M-9 4.7H9" stroke="#222" stroke-width="1.2"/><path d="M-8.5 4.7 L-7.8 4.1 L-7.0 3.5 L-6.3 3.0 L-5.6 2.6 L-4.9 2.3 L-4.1 2.2 L-3.4 2.2 L-2.7 2.4 L-1.9 2.7 L-1.2 3.2 L-0.5 3.7 L0.2 4.3 L1.0 4.9 L1.7 5.5 L2.4 6.1 L3.2 6.6 L3.9 6.9 L4.6 7.1 L5.4 7.2 L6.1 7.1 L6.8 6.9 L7.5 6.5 L8.3 6.0 L9.0 5.5" fill="none" stroke="#3030ff" stroke-width="0.9"/><path d="M5.4 -8V8.6" stroke="#00e000" stroke-width="1.7"/><path d="M-1.4 -5.4H3.6M3.8 -5.4L1.8 -7.2M3.8 -5.4L1.8 -3.6" stroke="#2828ff" stroke-width="1" fill="none"/></g><g transform="translate(95 517.5)"><path d="M-7.7 -8.5V8.8" stroke="#a9a9a9" stroke-width="1.3"/><path d="M-9 4.7H9" stroke="#a9a9a9" stroke-width="1.2"/><path d="M-8.5 4.7 L-7.8 4.1 L-7.0 3.6 L-6.3 3.1 L-5.6 2.7 L-4.9 2.4 L-4.1 2.3 L-3.4 2.3 L-2.7 2.5 L-1.9 2.8 L-1.2 3.2 L-0.5 3.8 L0.2 4.3 L1.0 4.9 L1.7 5.5 L2.4 6.0 L3.2 6.5 L3.9 6.8 L4.6 7.0 L5.4 7.1 L6.1 7.0 L6.8 6.8 L7.5 6.4 L8.3 6.0 L9.0 5.4" fill="none" stroke="#b4b4b4" stroke-width="1"/><path d="M4.5 -5V6" stroke="#a9a9a9" stroke-width="1.2"/></g><rect x="109.1" y="505" width="1.2" height="27" fill="#8d8d8d"/><g transform="translate(124 517.5)"><rect x="-9" y="-9" width="18" height="18" rx="2.2" fill="#000"/><text x="0.2" y="4.9" text-anchor="middle" font-size="13.5" font-weight="bold" fill="#fff">P</text></g><rect x="138.0" y="505" width="1.2" height="27" fill="#8d8d8d"/><rect x="142" y="504.5" width="23" height="25" fill="#c2dcf4" stroke="#8fc2f1" stroke-width="1"/><g transform="translate(153 517.5)"><path d="M-8.6 6.6C-6.8 6.6 -6.4 5.2 -5.8 2.6C-5.2 -0.6 -4.8 -2.6 -4 -2.6C-3.2 -2.6 -3 1.6 -2.2 5C-1.8 6.4 -1.2 5.4 -0.8 3.6C-0.4 2.4 0 2.6 0.4 4.2C0.8 6 1.4 6.4 2 4.6C2.4 3.4 3 3.4 3.4 4.8C3.8 6.2 4.6 6.8 5.4 6.6H8.6" fill="none" stroke="#111" stroke-width="1.05"/><path d="M-3.9 -8.4V7.2" stroke="#0a78ff" stroke-width="1.2"/></g><g transform="translate(176 517.5)"><rect x="-8" y="-9" width="16" height="18" fill="#ececec"/><circle cx="0" cy="0" r="5.8" fill="none" stroke="#444" stroke-width="1.2"/><path d="M-1.6 -8V8M1.6 -8V8" stroke="#666" stroke-width="1.3"/><path d="M-3.4 -8.4H3.4M-3.4 8.4H3.4" stroke="#555" stroke-width="1.1"/></g><g transform="translate(199 517.5)"><rect x="-8.8" y="-8.8" width="17.6" height="17.6" fill="#f2f2f2" stroke="#000" stroke-width="1.4"/><rect x="-8.8" y="-8.8" width="17.6" height="4.2" fill="#000"/><path d="M-8.8 -0.6H8.8M-8.8 3.6H8.8M-3 -4.6V8.8M3 -4.6V8.8" stroke="#8a8a8a" stroke-width="0.9"/></g><rect x="213.0" y="505" width="1.2" height="27" fill="#8d8d8d"/><g transform="translate(228 517.5)"><path transform="translate(0.5 0.4)" d="M-8.6 6.6C-6.8 6.6 -6.4 5.2 -5.8 2.6C-5.2 -0.6 -4.8 -2.6 -4 -2.6C-3.2 -2.6 -3 1.6 -2.2 5C-1.8 6.4 -1.2 5.4 -0.8 3.6C-0.4 2.4 0 2.6 0.4 4.2C0.8 6 1.4 6.4 2 4.6C2.4 3.4 3 3.4 3.4 4.8C3.8 6.2 4.6 6.8 5.4 6.6H8.6" fill="none" stroke="#111" stroke-width="1.05"/><text x="2.6" y="-1.2" text-anchor="middle" font-size="10.5" font-weight="bold" fill="#0a78ff">?</text></g><g transform="translate(251 517.5)"><path transform="translate(1.2 0.4)" d="M-8.6 6.6C-6.8 6.6 -6.4 5.2 -5.8 2.6C-5.2 -0.6 -4.8 -2.6 -4 -2.6C-3.2 -2.6 -3 1.6 -2.2 5C-1.8 6.4 -1.2 5.4 -0.8 3.6C-0.4 2.4 0 2.6 0.4 4.2C0.8 6 1.4 6.4 2 4.6C2.4 3.4 3 3.4 3.4 4.8C3.8 6.2 4.6 6.8 5.4 6.6H8.6" fill="none" stroke="#111" stroke-width="1.05"/><path d="M-7.6 -5.4L-0.4 1.4M-0.6 -5.6L-7.4 1.6" stroke="#f00000" stroke-width="1.7"/></g><rect x="264.9" y="505" width="1.2" height="27" fill="#8d8d8d"/><g transform="translate(280 517.5)"><rect x="-8.6" y="-8.6" width="17.4" height="17.4" rx="1.6" fill="#f1f1f1" stroke="#626262" stroke-width="1.3"/><path d="M0.2 -2.2V4.6" stroke="#6a6a6a" stroke-width="1.8"/><circle cx="0.2" cy="-4.8" r="1.1" fill="#6a6a6a"/></g><g transform="translate(303 517.5)"><rect x="-7.6" y="-7.6" width="15.4" height="15.4" fill="#fdfdfd" stroke="#0a0a0a" stroke-width="1.4"/><text x="0.1" y="5" text-anchor="middle" font-size="14.5" font-weight="bold" fill="#0a0a0a" style="font-family:'Liberation Serif',serif">T</text><circle cx="-7.4" cy="0.7" r="1.5" fill="#0a0a0a"/><circle cx="7.6" cy="0.7" r="1.5" fill="#0a0a0a"/></g><g transform="translate(326 517.5)"><rect x="-8.6" y="-8.6" width="17.4" height="17.4" rx="2.2" fill="#f1f1f1" stroke="#0c0c0c" stroke-width="1.4"/><circle cx="-4.8" cy="-3.8" r="1.05" fill="#0c0c0c"/><path d="M-2.3 -3.8H5.9" stroke="#1c1c1c" stroke-width="1.2"/><circle cx="-4.8" cy="0.1" r="1.05" fill="#0c0c0c"/><path d="M-2.3 0.1H5.9" stroke="#1c1c1c" stroke-width="1.2"/><circle cx="-4.8" cy="3.9" r="1.05" fill="#0c0c0c"/><path d="M-2.3 3.9H5.9" stroke="#1c1c1c" stroke-width="1.2"/></g><g transform="translate(349 517.5)"><path d="M2.2 -8.6H-6.4Q-8.6 -8.6 -8.6 -6.4V6.4Q-8.6 8.6 -6.4 8.6H6.4Q8.6 8.6 8.6 6.4V0.6" fill="none" stroke="#0c0c0c" stroke-width="1.3"/><path d="M-6.4 6.6L-4.4 1.4L4.8 -7.8L8 -4.6L-1.2 4.6Z" fill="#f4f4f4" stroke="#0c0c0c" stroke-width="1.3" stroke-linejoin="round"/><path d="M2.6 -5.6L5.8 -2.4M-4.4 1.4L-1.2 4.6M-2.6 2.8L5 -4.8" stroke="#0c0c0c" stroke-width="1" fill="none"/><path d="M-6.6 6.8L-5.4 3.6L-3.4 5.6Z" fill="#0c0c0c"/></g><g transform="translate(372 517.5)"><rect x="-8.6" y="-8.6" width="17.4" height="17.4" rx="1" fill="#f1f1f1" stroke="#111" stroke-width="1.4"/><text x="0.2" y="4.6" text-anchor="middle" font-size="12.5" fill="#333">?</text></g><rect x="6" y="531.6" width="544" height="1.6" fill="#fdfdfd"/><text transform="translate(277 549) scale(0.945 1)" text-anchor="middle" font-size="16" font-weight="bold" fill="#000" >IY UMA</text><rect x="52" y="554" width="493" height="230" fill="#fff"/><rect x="149.85" y="554" width="1.3" height="229" fill="#ececec"/><rect x="281.85" y="554" width="1.3" height="229" fill="#ececec"/><rect x="412.85" y="554" width="1.3" height="229" fill="#ececec"/><rect x="52" y="580" width="246" height="1" fill="#e9e9e9"/><path d="M298 580.5H544" stroke="#d2d2d2" stroke-width="1" stroke-dasharray="1 1" fill="none"/><rect x="52" y="643" width="246" height="1" fill="#e9e9e9"/><path d="M298 643.5H544" stroke="#d2d2d2" stroke-width="1" stroke-dasharray="1 1" fill="none"/><rect x="52" y="705" width="246" height="1" fill="#e9e9e9"/><path d="M298 705.5H544" stroke="#d2d2d2" stroke-width="1" stroke-dasharray="1 1" fill="none"/><rect x="52" y="768" width="246" height="1" fill="#e9e9e9"/><path d="M298 768.5H544" stroke="#d2d2d2" stroke-width="1" stroke-dasharray="1 1" fill="none"/><path d="M52.7 752.8 L53.4 757.7 L54.1 752.8 L54.8 758.9 L56.0 763.7 L57.0 757.7 L58.0 751.6 L58.7 749.2 L59.4 740.2 L60.2 751.6 L60.9 754.0 L61.4 759.5 L62.1 760.1 L62.8 763.1 L63.5 760.1 L64.5 762.5 L65.5 757.7 L66.2 752.8 L66.7 745.0 L67.4 752.8 L68.1 748.0 L68.6 755.9 L69.3 750.4 L70.1 760.1 L70.8 761.9 L71.8 760.7 L73.0 758.9 L73.7 754.0 L74.7 749.2 L75.6 745.6 L76.3 733.5 L77.1 737.7 L77.8 751.6 L78.5 758.9 L79.2 752.8 L80.2 755.9 L81.2 760.7 L82.1 752.8 L82.6 743.8 L83.4 757.7 L84.1 746.8 L85.0 738.3 L85.8 755.3 L86.7 750.4 L87.7 740.8 L88.4 748.0 L88.9 760.1 L89.9 762.5 L91.1 761.3 L91.8 752.8 L92.5 746.2 L93.3 754.7 L94.0 745.6 L94.7 709.6 L95.9 735.7 L97.0 743.0 L97.6 724.1 L98.8 735.7 L99.9 750.2 L100.5 732.2 L101.7 754.6 L102.8 756.0 L104.0 747.9 L105.1 718.3 L105.7 709.6 L106.9 735.7 L108.3 682.0 L109.8 718.3 L110.4 735.7 L111.5 712.5 L112.7 729.9 L113.8 741.5 L115.0 753.1 L116.2 743.0 L117.3 724.1 L118.5 747.3 L119.6 700.9 L120.5 635.6 L121.4 666.1 L122.5 700.9 L123.7 642.9 L124.6 645.8 L125.4 695.1 L126.6 718.3 L127.8 706.7 L128.9 738.6 L130.1 724.1 L131.3 712.5 L132.4 740.1 L133.6 706.7 L134.7 695.1 L135.9 721.2 L137.1 666.1 L138.2 577.6 L139.4 666.1 L140.2 695.1 L141.7 661.7 L142.9 706.7 L144.0 738.6 L145.2 740.1 L146.3 725.6 L147.5 735.7 L148.7 738.6 L149.8 725.6 L151.0 747.3 L152.1 748.8 L153.3 718.3 L154.5 703.8 L155.6 715.4 L156.8 674.8 L158.5 616.2 L159.7 666.1 L160.6 712.5 L161.4 731.4 L162.6 714.0 L163.8 735.7 L164.9 757.5 L166.1 741.5 L167.2 727.0 L168.4 731.4 L169.6 741.5 L170.0 741.5 L171.2 735.7 L172.3 747.3 L173.5 751.7 L174.6 729.9 L175.8 706.7 L177.5 700.9 L178.7 714.0 L179.9 700.9 L181.6 685.5 L182.8 712.5 L183.9 729.9 L185.1 738.6 L186.3 735.7 L187.4 734.3 L188.6 750.2 L189.7 756.0 L190.9 747.3 L192.1 740.1 L193.2 741.5 L194.4 753.1 L195.5 760.4 L196.7 741.5 L197.9 732.8 L199.0 735.7 L200.2 743.0 L201.3 741.5 L202.5 724.1 L203.7 712.5 L204.5 708.7 L205.4 721.2 L206.6 738.6 L207.7 740.1 L208.9 725.6 L210.0 722.1 L211.2 729.9 L212.4 737.2 L214.1 738.6 L215.3 744.4 L216.4 745.9 L217.6 750.2 L218.8 756.0 L219.9 756.6 L221.1 743.0 L222.2 753.1 L223.4 756.6 L225.1 755.5 L226.9 747.3 L228.0 738.6 L229.2 721.2 L230.4 714.0 L231.5 729.9 L232.7 741.5 L233.8 746.7 L235.0 744.4 L236.2 735.7 L237.3 727.0 L238.5 738.6 L239.6 740.1 L240.8 750.2 L242.0 735.7 L243.1 718.3 L244.3 712.5 L245.4 705.8 L246.6 735.7 L247.8 750.2 L248.9 741.5 L250.1 735.7 L251.3 754.6 L252.4 743.0 L253.6 753.1 L254.7 741.5 L255.9 743.0 L257.1 744.4 L258.2 741.5 L259.4 747.3 L260.5 745.9 L261.7 750.2 L262.9 735.7 L264.0 721.2 L265.2 716.9 L266.3 727.0 L267.5 738.6 L268.7 729.9 L269.8 738.6 L271.0 741.5 L272.1 748.8 L273.3 758.9 L274.5 747.3 L275.6 729.9 L276.8 711.1 L278.2 708.2 L279.4 740.1 L280.6 724.1 L281.7 727.0 L282.9 735.7 L284.0 744.4 L285.2 741.5 L286.4 729.9 L287.5 735.7 L288.7 747.3 L290.0 756.6 L291.7 748.8 L293.5 741.5 L295.2 738.0 L297.0 747.3 L298.7 752.6 L299.9 735.7 L301.6 709.6 L303.3 741.5 L305.1 718.3 L306.5 701.5 L308.0 727.0 L309.7 740.1 L311.5 721.8 L313.2 743.0 L315.0 754.6 L316.7 743.8 L318.4 751.7 L319.6 754.6 L320.8 729.9 L322.5 695.7 L324.2 720.6 L326.0 703.8 L328.3 660.3 L329.8 708.2 L331.5 722.7 L333.2 708.2 L335.0 714.0 L336.4 729.9 L337.6 740.9 L339.3 740.1 L340.5 731.4 L341.7 738.6 L342.8 746.7 L344.6 735.7 L346.6 696.5 L348.3 741.5 L350.1 727.0 L352.1 643.7 L354.1 677.7 L356.5 700.9 L358.2 660.3 L360.2 658.0 L362.5 708.2 L364.6 694.5 L366.3 691.6 L368.4 725.6 L370.4 732.2 L372.1 712.5 L373.9 700.9 L375.3 719.8 L377.3 699.4 L379.4 696.5 L381.4 694.5 L383.4 715.4 L386.1 638.5 L388.7 573.2 L390.7 686.4 L393.3 684.9 L395.3 632.7 L397.4 714.0 L398.8 718.3 L400.3 722.7 L402.6 694.5 L404.0 714.0 L405.5 731.4 L407.5 719.8 L409.3 731.4 L412.3 734.1 L415.2 741.3 L417.5 700.7 L420.4 674.6 L422.8 673.2 L425.4 666.5 L427.4 587.7 L430.3 689.1 L433.8 725.4 L436.7 700.7 L439.0 715.2 L441.9 741.3 L444.8 716.7 L447.4 710.9 L450.6 726.8 L453.5 690.6 L455.8 723.9 L458.7 731.2 L461.6 708.0 L464.2 697.8 L468.0 695.5 L471.4 662.5 L474.3 661.0 L477.5 650.6 L481.0 708.0 L483.6 722.5 L487.1 714.6 L490.6 744.2 L493.5 731.2 L497.0 723.3 L500.1 714.6 L503.3 721.0 L507.4 674.6 L510.6 719.6 L514.3 660.7 L518.1 665.9 L521.3 626.2 L525.4 703.0 L528.8 705.7 L531.7 700.7 L536.1 676.1 L540.4 630.3 L543.9 674.6" fill="none" stroke="#000" stroke-width="1.2" stroke-linejoin="round"/><path d="M138.6 554V784" stroke="#1c1cff" stroke-width="2" stroke-dasharray="2 2" fill="none"/><rect x="51.5" y="553.5" width="494" height="231" fill="none" stroke="#fafafa" stroke-width="1"/><rect x="52.5" y="554.5" width="492" height="229" fill="none" stroke="#000" stroke-width="1.25"/><rect x="95.5" y="760.5" width="74" height="18" rx="3.5" fill="#f8f8f8" fill-opacity="0.93" stroke="#2c2c2c" stroke-width="1.1"/><text x="132.5" y="775" text-anchor="middle" font-size="12.3" font-weight="normal" fill="#333" textLength="60.5" lengthAdjust="spacing">0.076161 d</text><text transform="translate(26.8 585.5) scale(0.89 1)" text-anchor="start" font-size="12" font-weight="normal" fill="#000" >+60</text><text transform="translate(26.8 648.0) scale(0.89 1)" text-anchor="start" font-size="12" font-weight="normal" fill="#000" >+40</text><text transform="translate(26.8 710.5) scale(0.89 1)" text-anchor="start" font-size="12" font-weight="normal" fill="#000" >+20</text><text transform="translate(32.7 773.1) scale(0.89 1)" text-anchor="start" font-size="12" font-weight="normal" fill="#000" >0</text><text transform="translate(150.6 797) scale(0.89 1)" text-anchor="middle" font-size="12" font-weight="normal" fill="#000" >0.08</text><text transform="translate(282.1 797) scale(0.89 1)" text-anchor="middle" font-size="12" font-weight="normal" fill="#000" >0.12</text><text transform="translate(413.6 797) scale(0.89 1)" text-anchor="middle" font-size="12" font-weight="normal" fill="#000" >0.16</text><text transform="translate(277.5 810) scale(0.89 1)" text-anchor="middle" font-size="12" font-weight="normal" fill="#000" >d</text><text transform="translate(544.5 810) scale(0.89 1)" text-anchor="end" font-size="12" font-weight="normal" fill="#000" >[0.199087, 5.02293, 53.1543]</text><text transform="translate(16.6 672.4) rotate(-90) scale(0.9 1)" font-size="11.5">Theta</text></svg>
<div class="frame in" style="left:563px;top:474px;width:560px;height:350px"></div><div class="cap in" style="left:565px;top:476px;width:556px;height:29px"></div><div class="client" style="left:571px;top:505px;width:544px;height:311px"></div><svg style="left:573px;top:485px" width="16" height="16" viewBox="0 0 16 16"><rect x="0.5" y="0.5" width="15" height="15" fill="#dfdfdf" stroke="#9fb0c8" stroke-width="1"/><path d="M15.5 1v14.5H1" fill="none" stroke="#f6efe9" stroke-width="1"/><rect x="9" y="1" width="6" height="3" fill="#0a1ea0"/><text x="5" y="12" font-size="8.6" font-weight="bold" fill="#2a74c4">P</text></svg><div class="title in" style="left:593px;top:485px;letter-spacing:-0.19px">PhaseWin - ANOVA #1 for ObsWin #4 - Period: 0.07616 d</div><div class="a" style="left:1013px;top:484px;width:32px;height:18px;border:1px solid #8493b3;border-radius:3px;background:linear-gradient(#c9d7e7 0%,#c4d3e4 48%,#c0cfe1 52%,#cfdcea 100%);box-shadow:inset 0 0 0 1px rgba(255,255,255,.45)"></div><svg style="left:1013px;top:484px" width="32" height="18"><rect x="10.5" y="9.5" width="11" height="4" rx="1" fill="#fbfbfb" stroke="#47505f" stroke-width="1"/></svg><div class="a" style="left:1047px;top:484px;width:32px;height:18px;border:1px solid #8493b3;border-radius:3px;background:linear-gradient(#c9d7e7 0%,#c4d3e4 48%,#c0cfe1 52%,#cfdcea 100%);box-shadow:inset 0 0 0 1px rgba(255,255,255,.45)"></div><svg style="left:1047px;top:484px" width="32" height="18"><rect x="10.5" y="4.5" width="11" height="8" rx="1" fill="#fbfbfb" stroke="#47505f" stroke-width="1"/><rect x="13.5" y="7.5" width="5" height="2" fill="#b9c7da" stroke="#47505f" stroke-width="1"/></svg><div class="a" style="left:1081px;top:484px;width:32px;height:18px;border:1px solid #8493b3;border-radius:3px;background:linear-gradient(#c9d7e7 0%,#c4d3e4 48%,#c0cfe1 52%,#cfdcea 100%);box-shadow:inset 0 0 0 1px rgba(255,255,255,.45)"></div><svg style="left:1081px;top:484px" width="32" height="18"><path d="M12.0 6.0L20.0 12.0M20.0 6.0L12.0 12.0" stroke="#47505f" stroke-width="4.2" stroke-linecap="round"/><path d="M12.0 6.0L20.0 12.0M20.0 6.0L12.0 12.0" stroke="#fbfbfb" stroke-width="2.2" stroke-linecap="round"/></svg><svg style="left:0;top:0" width="1289" height="828" viewBox="0 0 1289 828"><path d="M575.7 508.3L577.3 506.7" stroke="#a6a6a6" stroke-width="1.3"/><path d="M576.7 509.3L578.3 507.7" stroke="#fbfbfb" stroke-width="1"/><path d="M575.7 512.3L577.3 510.7" stroke="#a6a6a6" stroke-width="1.3"/><path d="M576.7 513.3L578.3 511.7" stroke="#fbfbfb" stroke-width="1"/><path d="M575.7 516.3L577.3 514.7" stroke="#a6a6a6" stroke-width="1.3"/><path d="M576.7 517.3L578.3 515.7" stroke="#fbfbfb" stroke-width="1"/><path d="M575.7 520.3L577.3 518.7" stroke="#a6a6a6" stroke-width="1.3"/><path d="M576.7 521.3L578.3 519.7" stroke="#fbfbfb" stroke-width="1"/><path d="M575.7 524.3L577.3 522.7" stroke="#a6a6a6" stroke-width="1.3"/><path d="M576.7 525.3L578.3 523.7" stroke="#fbfbfb" stroke-width="1"/><path d="M575.7 528.3L577.3 526.7" stroke="#a6a6a6" stroke-width="1.3"/><path d="M576.7 529.3L578.3 527.7" stroke="#fbfbfb" stroke-width="1"/><path d="M575.7 532.3L577.3 530.7" stroke="#a6a6a6" stroke-width="1.3"/><path d="M576.7 533.3L578.3 531.7" stroke="#fbfbfb" stroke-width="1"/><g transform="translate(591 519.5)"><path transform="scale(1 1)" d="M-7.2 -7.2h4.6l-1.6 1.6 2.6 2.6-1.4 1.4-2.6-2.6-1.6 1.6z" fill="#111"/><path transform="scale(-1 1)" d="M-7.2 -7.2h4.6l-1.6 1.6 2.6 2.6-1.4 1.4-2.6-2.6-1.6 1.6z" fill="#111"/><path transform="scale(1 -1)" d="M-7.2 -7.2h4.6l-1.6 1.6 2.6 2.6-1.4 1.4-2.6-2.6-1.6 1.6z" fill="#111"/><path transform="scale(-1 -1)" d="M-7.2 -7.2h4.6l-1.6 1.6 2.6 2.6-1.4 1.4-2.6-2.6-1.6 1.6z" fill="#111"/></g><g transform="translate(614 519.5)"><rect x="-8" y="-9" width="16" height="18" fill="#eeeeee"/><circle cx="0" cy="0" r="5.7" fill="none" stroke="#222" stroke-width="1.1"/><path d="M0 -8.4V8.4" stroke="#555" stroke-width="1.5"/><path d="M-1.8 -8.6H1.8M-1.8 8.6H1.8" stroke="#444" stroke-width="1"/></g><g transform="translate(637 519.5)"><rect x="-8" y="-9" width="16" height="18" fill="#ececec"/><circle cx="0" cy="0" r="5.8" fill="none" stroke="#444" stroke-width="1.2"/><path d="M-1.6 -8V8M1.6 -8V8" stroke="#666" stroke-width="1.3"/><path d="M-3.4 -8.4H3.4M-3.4 8.4H3.4" stroke="#555" stroke-width="1.1"/></g><rect x="651.1" y="507" width="1.2" height="27" fill="#8d8d8d"/><g transform="translate(668 519.5)"><path d="M-7.5 -8.5V8.8" stroke="#222" stroke-width="1.3"/><path d="M-9 4.7H9" stroke="#222" stroke-width="1.2"/><path d="M-8.5 4.7 L-7.8 4.1 L-7.0 3.5 L-6.3 3.0 L-5.6 2.6 L-4.9 2.3 L-4.1 2.2 L-3.4 2.2 L-2.7 2.4 L-1.9 2.7 L-1.2 3.2 L-0.5 3.7 L0.2 4.3 L1.0 4.9 L1.7 5.5 L2.4 6.1 L3.2 6.6 L3.9 6.9 L4.6 7.1 L5.4 7.2 L6.1 7.1 L6.8 6.9 L7.5 6.5 L8.3 6.0 L9.0 5.5" fill="none" stroke="#3030ff" stroke-width="0.9"/><path d="M-4.7 -8V8.6" stroke="#00e000" stroke-width="1.7"/><path d="M-3 -5.4H1.8M-3.2 -5.4L-1.2 -7.2M-3.2 -5.4L-1.2 -3.6" stroke="#2828ff" stroke-width="1" fill="none"/></g><g transform="translate(691 519.5)"><path d="M-7.5 -8.5V8.8" stroke="#222" stroke-width="1.3"/><path d="M-9 4.7H9" stroke="#222" stroke-width="1.2"/><path d="M-8.5 4.7 L-7.8 4.1 L-7.0 3.5 L-6.3 3.0 L-5.6 2.6 L-4.9 2.3 L-4.1 2.2 L-3.4 2.2 L-2.7 2.4 L-1.9 2.7 L-1.2 3.2 L-0.5 3.7 L0.2 4.3 L1.0 4.9 L1.7 5.5 L2.4 6.1 L3.2 6.6 L3.9 6.9 L4.6 7.1 L5.4 7.2 L6.1 7.1 L6.8 6.9 L7.5 6.5 L8.3 6.0 L9.0 5.5" fill="none" stroke="#3030ff" stroke-width="0.9"/><path d="M5.4 -8V8.6" stroke="#00e000" stroke-width="1.7"/><path d="M-1.4 -5.4H3.6M3.8 -5.4L1.8 -7.2M3.8 -5.4L1.8 -3.6" stroke="#2828ff" stroke-width="1" fill="none"/></g><g transform="translate(714 519.5)"><path d="M-7.7 -8.5V8.8" stroke="#a9a9a9" stroke-width="1.3"/><path d="M-9 4.7H9" stroke="#a9a9a9" stroke-width="1.2"/><path d="M-8.5 4.7 L-7.8 4.1 L-7.0 3.6 L-6.3 3.1 L-5.6 2.7 L-4.9 2.4 L-4.1 2.3 L-3.4 2.3 L-2.7 2.5 L-1.9 2.8 L-1.2 3.2 L-0.5 3.8 L0.2 4.3 L1.0 4.9 L1.7 5.5 L2.4 6.0 L3.2 6.5 L3.9 6.8 L4.6 7.0 L5.4 7.1 L6.1 7.0 L6.8 6.8 L7.5 6.4 L8.3 6.0 L9.0 5.4" fill="none" stroke="#b4b4b4" stroke-width="1"/><path d="M4.5 -5V6" stroke="#a9a9a9" stroke-width="1.2"/></g><rect x="726.5" y="507" width="1.2" height="27" fill="#8d8d8d"/><g transform="translate(742 519.5)"><path d="M-7.6 -7V6.8H7.8" fill="none" stroke="#0a0a0a" stroke-width="1.7"/><path d="M-7 5.2C-4.4 5.2 -3.8 2.6 -2.9 -1.2C-2 -5 -1.3 -6.8 -0.1 -6.8C1.1 -6.8 1.9 -5 2.8 -1.2C3.7 2.6 4.4 5.2 7.4 5.2" fill="none" stroke="#0a0a0a" stroke-width="1.6"/></g><rect x="755.3" y="507" width="1.2" height="27" fill="#8d8d8d"/><g transform="translate(770 519.5)"><rect x="-8.6" y="-8.6" width="17.4" height="17.4" rx="1.6" fill="#f1f1f1" stroke="#626262" stroke-width="1.3"/><path d="M0.2 -2.2V4.6" stroke="#6a6a6a" stroke-width="1.8"/><circle cx="0.2" cy="-4.8" r="1.1" fill="#6a6a6a"/></g><g transform="translate(793 519.5)"><rect x="-7.6" y="-7.6" width="15.4" height="15.4" fill="#fdfdfd" stroke="#0a0a0a" stroke-width="1.4"/><text x="0.1" y="5" text-anchor="middle" font-size="14.5" font-weight="bold" fill="#0a0a0a" style="font-family:'Liberation Serif',serif">T</text><circle cx="-7.4" cy="0.7" r="1.5" fill="#0a0a0a"/><circle cx="7.6" cy="0.7" r="1.5" fill="#0a0a0a"/></g><g transform="translate(816 519.5)"><rect x="-8.6" y="-8.6" width="17.4" height="17.4" rx="2.2" fill="#f1f1f1" stroke="#0c0c0c" stroke-width="1.4"/><circle cx="-4.8" cy="-3.8" r="1.05" fill="#0c0c0c"/><path d="M-2.3 -3.8H5.9" stroke="#1c1c1c" stroke-width="1.2"/><circle cx="-4.8" cy="0.1" r="1.05" fill="#0c0c0c"/><path d="M-2.3 0.1H5.9" stroke="#1c1c1c" stroke-width="1.2"/><circle cx="-4.8" cy="3.9" r="1.05" fill="#0c0c0c"/><path d="M-2.3 3.9H5.9" stroke="#1c1c1c" stroke-width="1.2"/></g><g transform="translate(839 519.5)"><path d="M2.2 -8.6H-6.4Q-8.6 -8.6 -8.6 -6.4V6.4Q-8.6 8.6 -6.4 8.6H6.4Q8.6 8.6 8.6 6.4V0.6" fill="none" stroke="#0c0c0c" stroke-width="1.3"/><path d="M-6.4 6.6L-4.4 1.4L4.8 -7.8L8 -4.6L-1.2 4.6Z" fill="#f4f4f4" stroke="#0c0c0c" stroke-width="1.3" stroke-linejoin="round"/><path d="M2.6 -5.6L5.8 -2.4M-4.4 1.4L-1.2 4.6M-2.6 2.8L5 -4.8" stroke="#0c0c0c" stroke-width="1" fill="none"/><path d="M-6.6 6.8L-5.4 3.6L-3.4 5.6Z" fill="#0c0c0c"/></g><g transform="translate(862 519.5)"><rect x="-8.6" y="-8.6" width="17.4" height="17.4" rx="1" fill="#f1f1f1" stroke="#111" stroke-width="1.4"/><text x="0.2" y="4.6" text-anchor="middle" font-size="12.5" fill="#333">?</text></g><rect x="571" y="533.6" width="544" height="1.6" fill="#fdfdfd"/><text transform="translate(841.6 551) scale(0.945 1)" text-anchor="middle" font-size="16" font-weight="bold" fill="#000" >IY UMA</text><rect x="620" y="556" width="490" height="230" fill="#fff"/><rect x="660.85" y="556" width="1.3" height="229" fill="#ececec"/><rect x="761.85" y="556" width="1.3" height="229" fill="#ececec"/><rect x="863.85" y="556" width="1.3" height="229" fill="#ececec"/><rect x="965.85" y="556" width="1.3" height="229" fill="#ececec"/><rect x="1067.85" y="556" width="1.3" height="229" fill="#ececec"/><rect x="620" y="599" width="243" height="1" fill="#e9e9e9"/><path d="M863 599.5H1109" stroke="#d2d2d2" stroke-width="1" stroke-dasharray="1 1" fill="none"/><rect x="620" y="658" width="243" height="1" fill="#e9e9e9"/><path d="M863 658.5H1109" stroke="#d2d2d2" stroke-width="1" stroke-dasharray="1 1" fill="none"/><rect x="620" y="717" width="243" height="1" fill="#e9e9e9"/><path d="M863 717.5H1109" stroke="#d2d2d2" stroke-width="1" stroke-dasharray="1 1" fill="none"/><rect x="620" y="776" width="243" height="1" fill="#e9e9e9"/><path d="M863 776.5H1109" stroke="#d2d2d2" stroke-width="1" stroke-dasharray="1 1" fill="none"/><g fill="#00e400" stroke="#000" stroke-width="0.9"><circle cx="659.3" cy="729.1" r="3.0"/><circle cx="1044.2" cy="750.4" r="3.0"/><circle cx="775.7" cy="718.0" r="3.0"/><circle cx="978.5" cy="705.6" r="3.0"/><circle cx="1000.6" cy="703.5" r="3.0"/><circle cx="1061.3" cy="711.7" r="3.0"/><circle cx="1068.3" cy="708.9" r="3.0"/><circle cx="1033.9" cy="733.9" r="3.0"/><circle cx="1060.9" cy="738.1" r="3.0"/><circle cx="775.9" cy="714.1" r="3.0"/><circle cx="983.9" cy="701.6" r="3.0"/><circle cx="1063.1" cy="691.1" r="3.0"/><circle cx="930.5" cy="651.3" r="3.0"/><circle cx="886.5" cy="761.0" r="3.0"/><circle cx="958.8" cy="680.0" r="3.0"/><circle cx="913.1" cy="614.2" r="3.0"/><circle cx="869.8" cy="659.6" r="3.0"/><circle cx="1064.0" cy="717.4" r="3.0"/><circle cx="942.8" cy="708.9" r="3.0"/><circle cx="926.3" cy="649.7" r="3.0"/><circle cx="784.3" cy="710.0" r="3.0"/><circle cx="868.8" cy="673.8" r="3.0"/><circle cx="724.4" cy="632.0" r="3.0"/><circle cx="1030.3" cy="733.4" r="3.0"/><circle cx="862.1" cy="669.8" r="3.0"/><circle cx="989.7" cy="725.9" r="3.0"/><circle cx="973.5" cy="714.6" r="3.0"/><circle cx="860.3" cy="722.3" r="3.0"/><circle cx="835.6" cy="743.0" r="3.0"/><circle cx="815.7" cy="744.3" r="3.0"/><circle cx="748.2" cy="714.9" r="3.0"/><circle cx="778.1" cy="706.4" r="3.0"/><circle cx="864.1" cy="725.5" r="3.0"/><circle cx="783.8" cy="726.1" r="3.0"/><circle cx="671.2" cy="656.6" r="3.0"/><circle cx="969.5" cy="709.1" r="3.0"/><circle cx="785.9" cy="694.9" r="3.0"/><circle cx="1012.1" cy="765.7" r="3.0"/><circle cx="902.6" cy="622.1" r="3.0"/><circle cx="795.9" cy="718.7" r="3.0"/><circle cx="942.5" cy="699.8" r="3.0"/><circle cx="814.0" cy="759.3" r="3.0"/><circle cx="892.5" cy="588.1" r="3.0"/><circle cx="911.8" cy="628.3" r="3.0"/><circle cx="981.8" cy="702.6" r="3.0"/><circle cx="989.9" cy="691.6" r="3.0"/><circle cx="786.5" cy="702.3" r="3.0"/><circle cx="849.2" cy="710.5" r="3.0"/><circle cx="900.4" cy="616.4" r="3.0"/><circle cx="751.3" cy="715.4" r="3.0"/><circle cx="763.1" cy="684.7" r="3.0"/><circle cx="971.3" cy="707.5" r="3.0"/><circle cx="902.3" cy="595.9" r="3.0"/><circle cx="694.2" cy="736.1" r="3.0"/><circle cx="901.8" cy="588.7" r="3.0"/><circle cx="896.0" cy="610.0" r="3.0"/><circle cx="1066.5" cy="728.0" r="3.0"/><circle cx="767.6" cy="698.5" r="3.0"/><circle cx="692.5" cy="592.1" r="3.0"/><circle cx="738.4" cy="665.8" r="3.0"/><circle cx="990.5" cy="710.3" r="3.0"/><circle cx="1028.1" cy="767.0" r="3.0"/><circle cx="1020.5" cy="728.0" r="3.0"/><circle cx="895.1" cy="600.1" r="3.0"/><circle cx="740.1" cy="729.3" r="3.0"/><circle cx="806.2" cy="734.8" r="3.0"/><circle cx="856.0" cy="699.6" r="3.0"/><circle cx="954.5" cy="695.7" r="3.0"/><circle cx="1012.9" cy="742.7" r="3.0"/><circle cx="1026.9" cy="734.0" r="3.0"/><circle cx="1011.0" cy="727.9" r="3.0"/><circle cx="805.4" cy="761.9" r="3.0"/><circle cx="929.0" cy="655.9" r="3.0"/><circle cx="768.6" cy="717.8" r="3.0"/><circle cx="928.9" cy="671.3" r="3.0"/><circle cx="986.2" cy="728.3" r="3.0"/><circle cx="853.2" cy="695.4" r="3.0"/><circle cx="822.1" cy="667.0" r="3.0"/><circle cx="981.8" cy="717.3" r="3.0"/><circle cx="689.2" cy="607.0" r="3.0"/><circle cx="737.1" cy="672.1" r="3.0"/><circle cx="916.3" cy="633.4" r="3.0"/><circle cx="974.1" cy="717.4" r="3.0"/><circle cx="965.1" cy="706.1" r="3.0"/><circle cx="1005.2" cy="675.6" r="3.0"/><circle cx="992.2" cy="717.9" r="3.0"/><circle cx="1024.0" cy="750.4" r="3.0"/><circle cx="840.0" cy="742.4" r="3.0"/><circle cx="917.5" cy="650.9" r="3.0"/><circle cx="714.3" cy="616.9" r="3.0"/><circle cx="1065.2" cy="760.8" r="3.0"/><circle cx="740.5" cy="650.9" r="3.0"/><circle cx="877.7" cy="640.7" r="3.0"/><circle cx="831.9" cy="734.9" r="3.0"/><circle cx="1015.9" cy="745.8" r="3.0"/><circle cx="1065.0" cy="694.8" r="3.0"/><circle cx="942.5" cy="687.1" r="3.0"/><circle cx="820.1" cy="750.4" r="3.0"/><circle cx="769.7" cy="704.6" r="3.0"/><circle cx="857.4" cy="711.7" r="3.0"/><circle cx="1062.4" cy="701.2" r="3.0"/><circle cx="790.0" cy="716.3" r="3.0"/><circle cx="660.3" cy="673.0" r="3.0"/><circle cx="944.4" cy="650.9" r="3.0"/><circle cx="936.1" cy="658.3" r="3.0"/><circle cx="782.4" cy="707.5" r="3.0"/><circle cx="999.8" cy="733.3" r="3.0"/><circle cx="788.4" cy="724.4" r="3.0"/><circle cx="876.2" cy="631.1" r="3.0"/><circle cx="961.8" cy="681.3" r="3.0"/><circle cx="817.0" cy="668.5" r="3.0"/><circle cx="858.3" cy="753.8" r="3.0"/><circle cx="918.7" cy="610.9" r="3.0"/><circle cx="975.9" cy="714.7" r="3.0"/><circle cx="673.4" cy="651.7" r="3.0"/><circle cx="1063.3" cy="711.6" r="3.0"/><circle cx="1029.0" cy="759.8" r="3.0"/><circle cx="972.0" cy="700.8" r="3.0"/><circle cx="867.5" cy="711.5" r="3.0"/><circle cx="794.8" cy="728.5" r="3.0"/><circle cx="789.9" cy="725.1" r="3.0"/><circle cx="693.0" cy="577.3" r="3.0"/><circle cx="1041.3" cy="762.9" r="3.0"/><circle cx="968.3" cy="717.0" r="3.0"/><circle cx="799.3" cy="738.8" r="3.0"/><circle cx="1011.4" cy="710.7" r="3.0"/><circle cx="733.5" cy="640.6" r="3.0"/><circle cx="1005.2" cy="753.3" r="3.0"/><circle cx="908.3" cy="630.0" r="3.0"/><circle cx="727.9" cy="658.6" r="3.0"/><circle cx="861.1" cy="673.5" r="3.0"/><circle cx="697.2" cy="607.4" r="3.0"/><circle cx="1058.9" cy="683.3" r="3.0"/><circle cx="1058.1" cy="722.9" r="3.0"/><circle cx="733.4" cy="670.7" r="3.0"/><circle cx="754.9" cy="680.0" r="3.0"/><circle cx="1019.6" cy="744.3" r="3.0"/><circle cx="764.4" cy="717.0" r="3.0"/><circle cx="711.5" cy="656.1" r="3.0"/><circle cx="898.4" cy="618.8" r="3.0"/><circle cx="872.1" cy="740.5" r="3.0"/><circle cx="693.0" cy="653.9" r="3.0"/><circle cx="808.2" cy="765.7" r="3.0"/><circle cx="663.1" cy="700.6" r="3.0"/><circle cx="818.8" cy="751.0" r="3.0"/><circle cx="1023.3" cy="741.3" r="3.0"/><circle cx="940.1" cy="686.2" r="3.0"/><circle cx="709.2" cy="614.2" r="3.0"/><circle cx="975.0" cy="704.8" r="3.0"/><circle cx="680.7" cy="618.0" r="3.0"/><circle cx="971.5" cy="702.1" r="3.0"/><circle cx="1006.6" cy="666.4" r="3.0"/><circle cx="660.2" cy="665.6" r="3.0"/><circle cx="888.3" cy="599.2" r="3.0"/><circle cx="828.5" cy="734.6" r="3.0"/><circle cx="885.3" cy="615.1" r="3.0"/><circle cx="812.0" cy="745.8" r="3.0"/><circle cx="904.3" cy="683.9" r="3.0"/><circle cx="896.3" cy="589.9" r="3.0"/><circle cx="975.3" cy="703.2" r="3.0"/><circle cx="1025.4" cy="757.3" r="3.0"/><circle cx="861.3" cy="698.8" r="3.0"/><circle cx="695.7" cy="713.8" r="3.0"/><circle cx="952.6" cy="727.8" r="3.0"/><circle cx="799.5" cy="699.9" r="3.0"/><circle cx="770.7" cy="698.2" r="3.0"/><circle cx="861.8" cy="743.2" r="3.0"/><circle cx="785.9" cy="706.4" r="3.0"/><circle cx="950.5" cy="711.9" r="3.0"/><circle cx="855.8" cy="714.3" r="3.0"/><circle cx="718.5" cy="655.0" r="3.0"/><circle cx="827.4" cy="755.0" r="3.0"/><circle cx="920.4" cy="651.7" r="3.0"/><circle cx="1023.3" cy="683.3" r="3.0"/><circle cx="785.2" cy="711.4" r="3.0"/><circle cx="964.7" cy="672.7" r="3.0"/><circle cx="1066.8" cy="700.5" r="3.0"/><circle cx="684.2" cy="592.1" r="3.0"/><circle cx="742.7" cy="702.7" r="3.0"/><circle cx="951.1" cy="698.8" r="3.0"/><circle cx="1065.6" cy="695.8" r="3.0"/><circle cx="934.8" cy="673.1" r="3.0"/><circle cx="1015.0" cy="670.0" r="3.0"/><circle cx="953.8" cy="751.5" r="3.0"/><circle cx="825.8" cy="738.2" r="3.0"/><circle cx="747.7" cy="705.9" r="3.0"/><circle cx="917.9" cy="621.9" r="3.0"/><circle cx="935.7" cy="665.4" r="3.0"/><circle cx="1067.1" cy="729.1" r="3.0"/><circle cx="825.3" cy="751.5" r="3.0"/><circle cx="916.1" cy="624.9" r="3.0"/><circle cx="721.1" cy="619.6" r="3.0"/><circle cx="952.1" cy="714.9" r="3.0"/><circle cx="937.4" cy="640.6" r="3.0"/><circle cx="863.0" cy="690.3" r="3.0"/><circle cx="714.0" cy="621.9" r="3.0"/><circle cx="963.8" cy="697.6" r="3.0"/><circle cx="764.6" cy="691.2" r="3.0"/><circle cx="989.5" cy="714.8" r="3.0"/><circle cx="776.7" cy="695.5" r="3.0"/><circle cx="859.2" cy="691.1" r="3.0"/><circle cx="719.0" cy="657.8" r="3.0"/><circle cx="975.3" cy="703.6" r="3.0"/><circle cx="859.9" cy="677.2" r="3.0"/><circle cx="1065.7" cy="685.7" r="3.0"/><circle cx="974.9" cy="708.6" r="3.0"/><circle cx="787.2" cy="714.2" r="3.0"/><circle cx="788.3" cy="699.2" r="3.0"/><circle cx="817.0" cy="739.3" r="3.0"/><circle cx="871.9" cy="728.2" r="3.0"/><circle cx="662.1" cy="757.0" r="3.0"/><circle cx="821.7" cy="732.4" r="3.0"/><circle cx="781.2" cy="718.8" r="3.0"/><circle cx="891.1" cy="597.0" r="3.0"/><circle cx="778.5" cy="720.9" r="3.0"/><circle cx="1063.9" cy="668.1" r="3.0"/><circle cx="1015.0" cy="730.0" r="3.0"/><circle cx="769.6" cy="714.6" r="3.0"/><circle cx="762.2" cy="699.4" r="3.0"/><circle cx="776.7" cy="705.5" r="3.0"/><circle cx="1050.9" cy="714.2" r="3.0"/><circle cx="998.3" cy="731.0" r="3.0"/><circle cx="1012.2" cy="741.7" r="3.0"/><circle cx="1013.5" cy="662.3" r="3.0"/><circle cx="788.3" cy="707.9" r="3.0"/><circle cx="687.5" cy="656.0" r="3.0"/><circle cx="896.2" cy="585.2" r="3.0"/><circle cx="773.6" cy="708.7" r="3.0"/><circle cx="851.9" cy="713.0" r="3.0"/><circle cx="966.1" cy="681.9" r="3.0"/><circle cx="749.9" cy="751.5" r="3.0"/><circle cx="740.9" cy="659.0" r="3.0"/><circle cx="980.6" cy="695.5" r="3.0"/><circle cx="1016.2" cy="746.0" r="3.0"/><circle cx="1037.5" cy="726.8" r="3.0"/><circle cx="990.3" cy="711.5" r="3.0"/><circle cx="685.6" cy="594.3" r="3.0"/><circle cx="882.1" cy="640.8" r="3.0"/><circle cx="742.4" cy="685.0" r="3.0"/><circle cx="983.2" cy="693.6" r="3.0"/><circle cx="1066.5" cy="708.2" r="3.0"/><circle cx="930.3" cy="661.6" r="3.0"/><circle cx="791.7" cy="715.4" r="3.0"/><circle cx="757.2" cy="719.0" r="3.0"/><circle cx="1065.3" cy="747.3" r="3.0"/><circle cx="812.7" cy="729.2" r="3.0"/><circle cx="829.5" cy="728.0" r="3.0"/><circle cx="1067.2" cy="755.4" r="3.0"/><circle cx="997.2" cy="729.1" r="3.0"/><circle cx="839.7" cy="755.8" r="3.0"/><circle cx="788.5" cy="706.9" r="3.0"/><circle cx="788.2" cy="718.2" r="3.0"/><circle cx="1068.7" cy="767.2" r="3.0"/><circle cx="966.6" cy="691.9" r="3.0"/><circle cx="874.4" cy="767.2" r="3.0"/><circle cx="762.5" cy="714.7" r="3.0"/><circle cx="752.5" cy="667.7" r="3.0"/><circle cx="826.7" cy="753.4" r="3.0"/><circle cx="663.9" cy="672.7" r="3.0"/><circle cx="746.9" cy="704.8" r="3.0"/><circle cx="982.0" cy="717.4" r="3.0"/><circle cx="785.2" cy="718.2" r="3.0"/><circle cx="1011.4" cy="728.7" r="3.0"/><circle cx="923.5" cy="617.9" r="3.0"/><circle cx="968.5" cy="691.2" r="3.0"/><circle cx="966.1" cy="699.4" r="3.0"/><circle cx="848.4" cy="737.1" r="3.0"/><circle cx="795.9" cy="733.3" r="3.0"/><circle cx="862.0" cy="676.6" r="3.0"/><circle cx="864.5" cy="677.9" r="3.0"/><circle cx="895.5" cy="766.6" r="3.0"/><circle cx="954.7" cy="713.7" r="3.0"/><circle cx="1019.6" cy="743.2" r="3.0"/><circle cx="827.5" cy="745.9" r="3.0"/><circle cx="859.4" cy="711.6" r="3.0"/><circle cx="1038.3" cy="747.9" r="3.0"/><circle cx="708.3" cy="638.7" r="3.0"/><circle cx="1003.4" cy="711.7" r="3.0"/><circle cx="1064.4" cy="681.0" r="3.0"/><circle cx="934.2" cy="635.4" r="3.0"/><circle cx="991.7" cy="713.8" r="3.0"/><circle cx="941.8" cy="675.3" r="3.0"/><circle cx="927.5" cy="642.5" r="3.0"/><circle cx="933.2" cy="652.8" r="3.0"/><circle cx="849.6" cy="709.4" r="3.0"/><circle cx="1028.7" cy="747.1" r="3.0"/><circle cx="1012.1" cy="716.3" r="3.0"/><circle cx="1059.7" cy="714.3" r="3.0"/><circle cx="813.9" cy="664.9" r="3.0"/><circle cx="905.2" cy="598.8" r="3.0"/><circle cx="966.1" cy="706.5" r="3.0"/><circle cx="869.8" cy="735.5" r="3.0"/><circle cx="716.5" cy="651.7" r="3.0"/><circle cx="922.4" cy="655.0" r="3.0"/><circle cx="1059.8" cy="715.0" r="3.0"/><circle cx="907.3" cy="592.9" r="3.0"/><circle cx="1066.0" cy="669.8" r="3.0"/><circle cx="782.7" cy="712.6" r="3.0"/><circle cx="748.5" cy="711.4" r="3.0"/><circle cx="866.0" cy="757.0" r="3.0"/><circle cx="737.5" cy="673.9" r="3.0"/><circle cx="860.9" cy="666.7" r="3.0"/><circle cx="1057.0" cy="671.4" r="3.0"/><circle cx="861.4" cy="670.2" r="3.0"/><circle cx="1032.4" cy="734.6" r="3.0"/><circle cx="1003.4" cy="699.9" r="3.0"/><circle cx="779.8" cy="724.5" r="3.0"/><circle cx="996.1" cy="714.0" r="3.0"/><circle cx="762.7" cy="691.9" r="3.0"/><circle cx="717.7" cy="637.5" r="3.0"/><circle cx="795.9" cy="718.6" r="3.0"/><circle cx="1044.3" cy="767.2" r="3.0"/><circle cx="717.2" cy="627.4" r="3.0"/><circle cx="1031.4" cy="745.9" r="3.0"/><circle cx="696.7" cy="613.1" r="3.0"/><circle cx="957.6" cy="697.3" r="3.0"/><circle cx="952.0" cy="703.9" r="3.0"/><circle cx="936.9" cy="640.0" r="3.0"/><circle cx="693.6" cy="743.5" r="3.0"/><circle cx="964.1" cy="716.0" r="3.0"/><circle cx="815.7" cy="743.2" r="3.0"/><circle cx="759.9" cy="697.6" r="3.0"/><circle cx="989.5" cy="724.4" r="3.0"/><circle cx="752.7" cy="705.0" r="3.0"/><circle cx="928.8" cy="652.0" r="3.0"/><circle cx="732.6" cy="684.6" r="3.0"/><circle cx="946.4" cy="712.6" r="3.0"/><circle cx="936.7" cy="656.6" r="3.0"/><circle cx="900.4" cy="755.6" r="3.0"/><circle cx="724.9" cy="652.0" r="3.0"/><circle cx="974.4" cy="690.6" r="3.0"/><circle cx="989.3" cy="733.4" r="3.0"/><circle cx="764.1" cy="707.7" r="3.0"/><circle cx="903.6" cy="667.9" r="3.0"/><circle cx="962.6" cy="707.4" r="3.0"/><circle cx="704.2" cy="597.0" r="3.0"/><circle cx="1007.2" cy="708.2" r="3.0"/><circle cx="836.2" cy="735.4" r="3.0"/><circle cx="888.1" cy="592.1" r="3.0"/><circle cx="993.9" cy="716.3" r="3.0"/><circle cx="976.9" cy="696.1" r="3.0"/><circle cx="981.9" cy="708.6" r="3.0"/><circle cx="933.2" cy="677.9" r="3.0"/><circle cx="969.4" cy="720.9" r="3.0"/><circle cx="1068.1" cy="673.0" r="3.0"/><circle cx="714.0" cy="629.7" r="3.0"/><circle cx="738.3" cy="690.3" r="3.0"/><circle cx="1005.5" cy="726.1" r="3.0"/><circle cx="681.3" cy="622.8" r="3.0"/><circle cx="771.0" cy="708.6" r="3.0"/><circle cx="714.2" cy="613.8" r="3.0"/><circle cx="759.4" cy="720.1" r="3.0"/><circle cx="753.7" cy="689.4" r="3.0"/><circle cx="782.3" cy="728.3" r="3.0"/><circle cx="728.8" cy="662.9" r="3.0"/><circle cx="843.7" cy="751.3" r="3.0"/><circle cx="690.2" cy="703.5" r="3.0"/><circle cx="882.8" cy="635.5" r="3.0"/><circle cx="688.6" cy="588.1" r="3.0"/><circle cx="992.2" cy="699.2" r="3.0"/><circle cx="853.1" cy="671.4" r="3.0"/><circle cx="914.0" cy="641.5" r="3.0"/><circle cx="962.2" cy="740.2" r="3.0"/><circle cx="819.8" cy="738.5" r="3.0"/><circle cx="1059.9" cy="699.6" r="3.0"/><circle cx="1012.7" cy="720.2" r="3.0"/><circle cx="826.5" cy="766.2" r="3.0"/><circle cx="898.9" cy="618.5" r="3.0"/><circle cx="970.0" cy="704.1" r="3.0"/><circle cx="888.6" cy="720.1" r="3.0"/><circle cx="713.1" cy="619.3" r="3.0"/><circle cx="919.2" cy="621.2" r="3.0"/><circle cx="906.9" cy="630.7" r="3.0"/><circle cx="855.0" cy="683.3" r="3.0"/><circle cx="837.6" cy="734.7" r="3.0"/><circle cx="736.3" cy="665.9" r="3.0"/><circle cx="756.2" cy="766.6" r="3.0"/><circle cx="792.2" cy="714.0" r="3.0"/><circle cx="1060.5" cy="706.3" r="3.0"/><circle cx="957.6" cy="728.2" r="3.0"/><circle cx="772.3" cy="704.7" r="3.0"/><circle cx="963.3" cy="720.1" r="3.0"/><circle cx="1001.1" cy="721.4" r="3.0"/><circle cx="867.0" cy="700.6" r="3.0"/><circle cx="1065.2" cy="678.7" r="3.0"/><circle cx="956.1" cy="693.9" r="3.0"/><circle cx="768.1" cy="697.9" r="3.0"/><circle cx="968.0" cy="708.2" r="3.0"/><circle cx="1063.8" cy="677.2" r="3.0"/><circle cx="949.9" cy="717.4" r="3.0"/><circle cx="691.4" cy="597.0" r="3.0"/><circle cx="1054.3" cy="722.3" r="3.0"/><circle cx="715.4" cy="646.3" r="3.0"/><circle cx="1024.1" cy="743.6" r="3.0"/><circle cx="669.0" cy="732.7" r="3.0"/><circle cx="828.8" cy="753.9" r="3.0"/><circle cx="865.8" cy="705.9" r="3.0"/><circle cx="752.6" cy="718.4" r="3.0"/><circle cx="1014.6" cy="712.4" r="3.0"/><circle cx="914.0" cy="605.0" r="3.0"/><circle cx="691.2" cy="600.1" r="3.0"/><circle cx="837.5" cy="749.2" r="3.0"/><circle cx="971.3" cy="707.7" r="3.0"/><circle cx="855.7" cy="738.9" r="3.0"/><circle cx="726.4" cy="661.6" r="3.0"/><circle cx="912.3" cy="604.4" r="3.0"/><circle cx="1065.6" cy="736.9" r="3.0"/><circle cx="868.2" cy="752.5" r="3.0"/><circle cx="960.6" cy="683.5" r="3.0"/><circle cx="1037.2" cy="752.4" r="3.0"/><circle cx="790.8" cy="736.7" r="3.0"/><circle cx="864.2" cy="673.0" r="3.0"/><circle cx="754.7" cy="671.1" r="3.0"/><circle cx="738.9" cy="708.9" r="3.0"/><circle cx="899.3" cy="629.5" r="3.0"/><circle cx="972.0" cy="697.9" r="3.0"/><circle cx="814.6" cy="752.8" r="3.0"/><circle cx="1023.6" cy="745.4" r="3.0"/><circle cx="1033.4" cy="728.0" r="3.0"/><circle cx="925.0" cy="659.3" r="3.0"/><circle cx="931.0" cy="649.6" r="3.0"/><circle cx="924.6" cy="643.4" r="3.0"/><circle cx="960.7" cy="665.2" r="3.0"/><circle cx="1033.2" cy="742.4" r="3.0"/><circle cx="1042.1" cy="724.8" r="3.0"/><circle cx="793.6" cy="726.4" r="3.0"/><circle cx="869.1" cy="711.1" r="3.0"/><circle cx="1020.9" cy="668.5" r="3.0"/><circle cx="723.7" cy="652.5" r="3.0"/><circle cx="1017.9" cy="723.8" r="3.0"/><circle cx="885.4" cy="625.6" r="3.0"/><circle cx="675.0" cy="624.1" r="3.0"/><circle cx="718.9" cy="633.8" r="3.0"/><circle cx="733.8" cy="658.7" r="3.0"/><circle cx="713.0" cy="651.7" r="3.0"/><circle cx="660.0" cy="729.6" r="3.0"/><circle cx="738.2" cy="686.5" r="3.0"/><circle cx="783.3" cy="674.7" r="3.0"/><circle cx="740.4" cy="690.1" r="3.0"/><circle cx="995.4" cy="692.8" r="3.0"/><circle cx="858.5" cy="701.2" r="3.0"/><circle cx="698.4" cy="595.9" r="3.0"/><circle cx="717.4" cy="637.4" r="3.0"/><circle cx="1043.7" cy="736.5" r="3.0"/><circle cx="932.2" cy="643.8" r="3.0"/><circle cx="973.6" cy="704.6" r="3.0"/><circle cx="930.2" cy="635.2" r="3.0"/><circle cx="1022.2" cy="738.9" r="3.0"/><circle cx="861.3" cy="678.7" r="3.0"/><circle cx="997.2" cy="730.2" r="3.0"/><circle cx="1055.1" cy="743.2" r="3.0"/><circle cx="988.6" cy="716.1" r="3.0"/><circle cx="729.6" cy="696.2" r="3.0"/><circle cx="995.4" cy="763.4" r="3.0"/><circle cx="745.6" cy="752.1" r="3.0"/><circle cx="842.9" cy="751.8" r="3.0"/><circle cx="909.0" cy="646.4" r="3.0"/><circle cx="1064.8" cy="666.7" r="3.0"/><circle cx="659.4" cy="697.2" r="3.0"/><circle cx="751.7" cy="689.2" r="3.0"/><circle cx="1040.1" cy="735.4" r="3.0"/><circle cx="900.6" cy="613.1" r="3.0"/><circle cx="796.2" cy="729.1" r="3.0"/><circle cx="988.2" cy="710.0" r="3.0"/><circle cx="786.6" cy="710.3" r="3.0"/><circle cx="1043.9" cy="742.4" r="3.0"/><circle cx="1025.8" cy="742.0" r="3.0"/><circle cx="940.5" cy="679.2" r="3.0"/><circle cx="813.1" cy="723.3" r="3.0"/><circle cx="835.2" cy="739.6" r="3.0"/><circle cx="887.2" cy="610.1" r="3.0"/><circle cx="913.2" cy="609.1" r="3.0"/><circle cx="944.8" cy="659.0" r="3.0"/><circle cx="719.3" cy="643.8" r="3.0"/><circle cx="1060.5" cy="689.0" r="3.0"/><circle cx="924.4" cy="648.2" r="3.0"/><circle cx="886.5" cy="765.7" r="3.0"/><circle cx="814.9" cy="734.1" r="3.0"/><circle cx="920.1" cy="654.1" r="3.0"/><circle cx="987.9" cy="718.0" r="3.0"/><circle cx="749.9" cy="703.5" r="3.0"/><circle cx="690.8" cy="621.3" r="3.0"/><circle cx="737.1" cy="645.9" r="3.0"/><circle cx="799.1" cy="715.5" r="3.0"/><circle cx="791.4" cy="736.8" r="3.0"/><circle cx="841.5" cy="738.1" r="3.0"/><circle cx="728.8" cy="660.3" r="3.0"/><circle cx="723.8" cy="628.0" r="3.0"/><circle cx="723.6" cy="642.5" r="3.0"/><circle cx="1047.6" cy="751.3" r="3.0"/><circle cx="763.3" cy="693.7" r="3.0"/><circle cx="810.5" cy="721.8" r="3.0"/><circle cx="984.4" cy="755.9" r="3.0"/><circle cx="866.9" cy="728.4" r="3.0"/><circle cx="890.0" cy="726.3" r="3.0"/><circle cx="1043.6" cy="755.8" r="3.0"/><circle cx="747.2" cy="698.8" r="3.0"/><circle cx="837.2" cy="749.0" r="3.0"/><circle cx="736.2" cy="686.2" r="3.0"/><circle cx="902.2" cy="586.1" r="3.0"/><circle cx="896.9" cy="730.4" r="3.0"/><circle cx="959.3" cy="765.7" r="3.0"/><circle cx="730.8" cy="656.8" r="3.0"/><circle cx="1020.6" cy="748.3" r="3.0"/><circle cx="1017.9" cy="759.3" r="3.0"/><circle cx="1062.2" cy="753.8" r="3.0"/><circle cx="967.0" cy="684.7" r="3.0"/><circle cx="1041.1" cy="749.0" r="3.0"/><circle cx="724.6" cy="653.9" r="3.0"/><circle cx="896.4" cy="592.1" r="3.0"/><circle cx="855.3" cy="689.6" r="3.0"/><circle cx="816.1" cy="740.9" r="3.0"/><circle cx="775.5" cy="727.5" r="3.0"/><circle cx="758.8" cy="719.6" r="3.0"/><circle cx="818.7" cy="759.5" r="3.0"/><circle cx="797.6" cy="709.9" r="3.0"/><circle cx="783.4" cy="703.9" r="3.0"/><circle cx="896.9" cy="661.1" r="3.0"/><circle cx="710.7" cy="627.3" r="3.0"/><circle cx="762.2" cy="696.6" r="3.0"/><circle cx="953.8" cy="703.5" r="3.0"/><circle cx="808.8" cy="720.2" r="3.0"/><circle cx="793.3" cy="730.2" r="3.0"/><circle cx="796.7" cy="703.5" r="3.0"/><circle cx="1016.5" cy="753.4" r="3.0"/><circle cx="699.8" cy="602.7" r="3.0"/><circle cx="807.5" cy="710.7" r="3.0"/><circle cx="941.9" cy="687.9" r="3.0"/><circle cx="739.3" cy="698.7" r="3.0"/><circle cx="741.8" cy="690.3" r="3.0"/><circle cx="781.6" cy="717.6" r="3.0"/><circle cx="970.1" cy="727.1" r="3.0"/><circle cx="767.6" cy="702.1" r="3.0"/><circle cx="777.8" cy="720.2" r="3.0"/><circle cx="715.3" cy="621.2" r="3.0"/><circle cx="735.3" cy="674.6" r="3.0"/><circle cx="801.3" cy="675.6" r="3.0"/><circle cx="774.6" cy="705.6" r="3.0"/><circle cx="766.1" cy="704.1" r="3.0"/><circle cx="767.4" cy="707.5" r="3.0"/><circle cx="743.4" cy="676.6" r="3.0"/><circle cx="729.9" cy="696.6" r="3.0"/><circle cx="664.9" cy="673.8" r="3.0"/><circle cx="837.4" cy="762.9" r="3.0"/><circle cx="1026.0" cy="667.0" r="3.0"/><circle cx="845.6" cy="729.7" r="3.0"/><circle cx="748.7" cy="727.8" r="3.0"/><circle cx="1025.9" cy="752.5" r="3.0"/><circle cx="998.0" cy="723.8" r="3.0"/><circle cx="714.4" cy="642.9" r="3.0"/><circle cx="733.0" cy="640.0" r="3.0"/><circle cx="861.7" cy="760.5" r="3.0"/><circle cx="937.3" cy="670.7" r="3.0"/><circle cx="765.6" cy="709.1" r="3.0"/><circle cx="760.7" cy="701.2" r="3.0"/><circle cx="863.9" cy="688.6" r="3.0"/><circle cx="732.2" cy="684.9" r="3.0"/><circle cx="990.4" cy="730.5" r="3.0"/><circle cx="914.6" cy="627.3" r="3.0"/><circle cx="854.2" cy="722.9" r="3.0"/><circle cx="810.7" cy="712.4" r="3.0"/><circle cx="791.5" cy="692.8" r="3.0"/><circle cx="710.7" cy="645.7" r="3.0"/><circle cx="699.7" cy="667.9" r="3.0"/><circle cx="1023.7" cy="738.5" r="3.0"/><circle cx="753.7" cy="728.2" r="3.0"/><circle cx="756.4" cy="669.1" r="3.0"/><circle cx="931.3" cy="678.3" r="3.0"/><circle cx="1038.9" cy="756.8" r="3.0"/><circle cx="766.2" cy="727.1" r="3.0"/><circle cx="929.2" cy="657.2" r="3.0"/><circle cx="906.8" cy="611.6" r="3.0"/><circle cx="682.6" cy="765.7" r="3.0"/><circle cx="916.3" cy="641.5" r="3.0"/><circle cx="933.5" cy="696.2" r="3.0"/><circle cx="682.6" cy="761.0" r="3.0"/><circle cx="851.2" cy="743.2" r="3.0"/><circle cx="1041.5" cy="734.7" r="3.0"/><circle cx="989.8" cy="694.9" r="3.0"/><circle cx="896.9" cy="653.9" r="3.0"/><circle cx="924.2" cy="675.3" r="3.0"/><circle cx="990.4" cy="705.1" r="3.0"/><circle cx="684.4" cy="599.2" r="3.0"/><circle cx="838.6" cy="743.7" r="3.0"/><circle cx="772.6" cy="716.8" r="3.0"/><circle cx="1056.9" cy="691.7" r="3.0"/><circle cx="824.2" cy="767.0" r="3.0"/><circle cx="744.1" cy="680.5" r="3.0"/><circle cx="1016.2" cy="728.2" r="3.0"/><circle cx="778.3" cy="709.2" r="3.0"/><circle cx="999.2" cy="709.7" r="3.0"/><circle cx="938.5" cy="659.8" r="3.0"/><circle cx="945.0" cy="697.9" r="3.0"/><circle cx="765.3" cy="706.3" r="3.0"/><circle cx="945.3" cy="688.9" r="3.0"/><circle cx="875.2" cy="653.6" r="3.0"/><circle cx="861.5" cy="721.4" r="3.0"/><circle cx="917.0" cy="619.3" r="3.0"/><circle cx="727.4" cy="673.4" r="3.0"/><circle cx="976.2" cy="704.7" r="3.0"/><circle cx="985.5" cy="717.6" r="3.0"/><circle cx="688.4" cy="601.1" r="3.0"/><circle cx="945.3" cy="664.9" r="3.0"/><circle cx="953.2" cy="670.3" r="3.0"/><circle cx="1057.5" cy="692.6" r="3.0"/><circle cx="960.2" cy="697.1" r="3.0"/><circle cx="1006.0" cy="732.1" r="3.0"/><circle cx="985.1" cy="718.8" r="3.0"/><circle cx="665.0" cy="713.4" r="3.0"/><circle cx="1016.6" cy="729.2" r="3.0"/><circle cx="678.9" cy="635.5" r="3.0"/><circle cx="962.2" cy="704.9" r="3.0"/><circle cx="694.7" cy="610.6" r="3.0"/><circle cx="1017.0" cy="723.3" r="3.0"/><circle cx="744.8" cy="664.4" r="3.0"/><circle cx="756.7" cy="683.5" r="3.0"/><circle cx="695.1" cy="615.6" r="3.0"/><circle cx="946.6" cy="702.7" r="3.0"/><circle cx="781.6" cy="716.1" r="3.0"/><circle cx="977.0" cy="728.1" r="3.0"/><circle cx="860.1" cy="717.4" r="3.0"/><circle cx="660.9" cy="767.2" r="3.0"/><circle cx="777.9" cy="717.3" r="3.0"/><circle cx="952.2" cy="665.4" r="3.0"/><circle cx="861.4" cy="747.3" r="3.0"/><circle cx="918.5" cy="630.1" r="3.0"/><circle cx="944.3" cy="690.1" r="3.0"/><circle cx="875.1" cy="656.6" r="3.0"/><circle cx="717.3" cy="648.2" r="3.0"/><circle cx="1051.7" cy="728.4" r="3.0"/><circle cx="771.8" cy="721.0" r="3.0"/><circle cx="937.7" cy="658.7" r="3.0"/><circle cx="927.6" cy="652.5" r="3.0"/><circle cx="741.8" cy="658.3" r="3.0"/><circle cx="791.7" cy="696.3" r="3.0"/><circle cx="713.6" cy="650.9" r="3.0"/><circle cx="794.4" cy="673.5" r="3.0"/><circle cx="1065.0" cy="673.5" r="3.0"/><circle cx="660.5" cy="708.9" r="3.0"/><circle cx="797.2" cy="661.4" r="3.0"/><circle cx="786.1" cy="713.8" r="3.0"/><circle cx="731.8" cy="653.7" r="3.0"/><circle cx="919.3" cy="646.3" r="3.0"/><circle cx="1025.7" cy="745.3" r="3.0"/><circle cx="777.2" cy="684.2" r="3.0"/><circle cx="758.9" cy="711.3" r="3.0"/><circle cx="978.1" cy="705.7" r="3.0"/><circle cx="712.4" cy="641.5" r="3.0"/><circle cx="709.0" cy="661.9" r="3.0"/><circle cx="1028.3" cy="749.6" r="3.0"/><circle cx="902.8" cy="633.9" r="3.0"/><circle cx="722.6" cy="608.9" r="3.0"/><circle cx="659.4" cy="755.4" r="3.0"/><circle cx="929.4" cy="653.2" r="3.0"/><circle cx="754.7" cy="711.8" r="3.0"/><circle cx="894.1" cy="703.5" r="3.0"/><circle cx="786.4" cy="711.5" r="3.0"/><circle cx="862.7" cy="695.9" r="3.0"/><circle cx="1029.7" cy="738.2" r="3.0"/><circle cx="698.7" cy="622.1" r="3.0"/><circle cx="780.4" cy="723.9" r="3.0"/><circle cx="861.1" cy="694.8" r="3.0"/><circle cx="784.2" cy="717.4" r="3.0"/><circle cx="852.7" cy="673.0" r="3.0"/><circle cx="981.7" cy="720.2" r="3.0"/><circle cx="734.4" cy="684.4" r="3.0"/><circle cx="1042.5" cy="743.7" r="3.0"/><circle cx="863.3" cy="715.0" r="3.0"/><circle cx="993.3" cy="719.0" r="3.0"/><circle cx="951.6" cy="705.9" r="3.0"/><circle cx="661.9" cy="705.9" r="3.0"/><circle cx="995.6" cy="727.4" r="3.0"/><circle cx="911.0" cy="657.8" r="3.0"/><circle cx="1058.8" cy="714.1" r="3.0"/><circle cx="789.4" cy="719.0" r="3.0"/><circle cx="989.7" cy="723.0" r="3.0"/><circle cx="1053.5" cy="709.4" r="3.0"/><circle cx="990.8" cy="734.8" r="3.0"/><circle cx="921.2" cy="648.2" r="3.0"/><circle cx="1005.3" cy="714.8" r="3.0"/><circle cx="1001.5" cy="709.9" r="3.0"/><circle cx="999.8" cy="718.6" r="3.0"/><circle cx="800.8" cy="709.3" r="3.0"/><circle cx="816.2" cy="758.5" r="3.0"/><circle cx="1066.7" cy="717.2" r="3.0"/><circle cx="856.6" cy="689.0" r="3.0"/><circle cx="902.4" cy="750.9" r="3.0"/><circle cx="898.6" cy="610.6" r="3.0"/><circle cx="811.1" cy="742.7" r="3.0"/><circle cx="1049.9" cy="756.3" r="3.0"/><circle cx="762.2" cy="706.5" r="3.0"/><circle cx="932.7" cy="646.0" r="3.0"/><circle cx="819.4" cy="683.3" r="3.0"/><circle cx="1029.2" cy="751.5" r="3.0"/><circle cx="885.2" cy="622.8" r="3.0"/><circle cx="665.9" cy="735.5" r="3.0"/><circle cx="863.3" cy="755.4" r="3.0"/><circle cx="853.0" cy="691.7" r="3.0"/><circle cx="918.3" cy="660.9" r="3.0"/><circle cx="997.5" cy="726.4" r="3.0"/><circle cx="1053.1" cy="710.5" r="3.0"/><circle cx="894.1" cy="697.2" r="3.0"/><circle cx="765.5" cy="720.9" r="3.0"/><circle cx="754.7" cy="712.4" r="3.0"/><circle cx="802.5" cy="729.7" r="3.0"/><circle cx="695.1" cy="622.1" r="3.0"/><circle cx="984.9" cy="716.0" r="3.0"/><circle cx="964.6" cy="701.2" r="3.0"/><circle cx="780.0" cy="701.6" r="3.0"/><circle cx="684.4" cy="600.4" r="3.0"/><circle cx="777.9" cy="702.6" r="3.0"/><circle cx="994.7" cy="736.7" r="3.0"/><circle cx="889.5" cy="594.3" r="3.0"/><circle cx="725.1" cy="655.9" r="3.0"/><circle cx="943.2" cy="698.7" r="3.0"/><circle cx="797.2" cy="721.4" r="3.0"/><circle cx="949.0" cy="692.0" r="3.0"/><circle cx="989.1" cy="718.2" r="3.0"/><circle cx="975.7" cy="721.0" r="3.0"/><circle cx="1015.0" cy="742.7" r="3.0"/><circle cx="684.8" cy="593.4" r="3.0"/><circle cx="938.3" cy="684.4" r="3.0"/><circle cx="1044.6" cy="740.3" r="3.0"/><circle cx="732.2" cy="658.3" r="3.0"/><circle cx="803.7" cy="724.2" r="3.0"/><circle cx="981.3" cy="710.9" r="3.0"/><circle cx="897.5" cy="743.5" r="3.0"/><circle cx="873.4" cy="637.1" r="3.0"/><circle cx="934.8" cy="645.7" r="3.0"/><circle cx="684.6" cy="612.0" r="3.0"/><circle cx="863.3" cy="697.2" r="3.0"/><circle cx="953.5" cy="694.2" r="3.0"/><circle cx="949.5" cy="752.1" r="3.0"/><circle cx="726.3" cy="654.3" r="3.0"/><circle cx="1031.3" cy="755.0" r="3.0"/><circle cx="668.2" cy="766.3" r="3.0"/><circle cx="1067.2" cy="715.0" r="3.0"/><circle cx="807.1" cy="727.9" r="3.0"/><circle cx="770.2" cy="717.4" r="3.0"/><circle cx="1067.2" cy="697.2" r="3.0"/><circle cx="798.9" cy="699.3" r="3.0"/><circle cx="911.5" cy="635.1" r="3.0"/><circle cx="951.7" cy="716.1" r="3.0"/><circle cx="780.5" cy="751.5" r="3.0"/><circle cx="700.4" cy="637.7" r="3.0"/><circle cx="844.0" cy="721.9" r="3.0"/><circle cx="921.6" cy="637.5" r="3.0"/><circle cx="727.1" cy="649.6" r="3.0"/><circle cx="991.1" cy="714.2" r="3.0"/><circle cx="755.4" cy="765.7" r="3.0"/><circle cx="748.1" cy="703.9" r="3.0"/><circle cx="784.3" cy="713.7" r="3.0"/><circle cx="926.5" cy="608.9" r="3.0"/><circle cx="660.6" cy="677.9" r="3.0"/><circle cx="1064.6" cy="673.7" r="3.0"/><circle cx="1068.4" cy="677.9" r="3.0"/><circle cx="892.6" cy="721.3" r="3.0"/><circle cx="749.2" cy="697.4" r="3.0"/><circle cx="707.9" cy="628.3" r="3.0"/><circle cx="766.1" cy="687.4" r="3.0"/><circle cx="967.3" cy="684.9" r="3.0"/><circle cx="714.3" cy="645.4" r="3.0"/><circle cx="853.6" cy="692.6" r="3.0"/><circle cx="729.2" cy="646.5" r="3.0"/><circle cx="903.7" cy="602.7" r="3.0"/><circle cx="807.8" cy="658.1" r="3.0"/><circle cx="749.6" cy="694.2" r="3.0"/><circle cx="822.0" cy="752.5" r="3.0"/><circle cx="928.6" cy="672.7" r="3.0"/><circle cx="982.2" cy="716.2" r="3.0"/><circle cx="980.6" cy="705.5" r="3.0"/><circle cx="1059.2" cy="689.6" r="3.0"/><circle cx="931.3" cy="673.4" r="3.0"/><circle cx="1029.2" cy="741.4" r="3.0"/><circle cx="861.3" cy="760.8" r="3.0"/><circle cx="748.3" cy="665.4" r="3.0"/><circle cx="947.3" cy="676.6" r="3.0"/><circle cx="888.3" cy="600.4" r="3.0"/><circle cx="690.2" cy="697.2" r="3.0"/><circle cx="742.3" cy="673.7" r="3.0"/><circle cx="918.2" cy="645.4" r="3.0"/><circle cx="785.6" cy="724.1" r="3.0"/><circle cx="725.0" cy="671.3" r="3.0"/><circle cx="979.4" cy="727.5" r="3.0"/><circle cx="802.7" cy="666.4" r="3.0"/><circle cx="980.0" cy="711.9" r="3.0"/><circle cx="728.3" cy="643.8" r="3.0"/><circle cx="932.7" cy="660.3" r="3.0"/><circle cx="981.1" cy="684.2" r="3.0"/><circle cx="945.7" cy="690.3" r="3.0"/><circle cx="950.3" cy="702.1" r="3.0"/><circle cx="942.7" cy="696.8" r="3.0"/><circle cx="694.5" cy="618.8" r="3.0"/><circle cx="746.4" cy="702.1" r="3.0"/><circle cx="844.3" cy="758.8" r="3.0"/><circle cx="958.2" cy="677.3" r="3.0"/><circle cx="974.6" cy="698.2" r="3.0"/><circle cx="786.0" cy="691.6" r="3.0"/><circle cx="738.0" cy="687.9" r="3.0"/><circle cx="801.6" cy="726.1" r="3.0"/><circle cx="681.5" cy="625.6" r="3.0"/><circle cx="1006.4" cy="729.7" r="3.0"/><circle cx="710.1" cy="641.5" r="3.0"/><circle cx="814.0" cy="723.8" r="3.0"/><circle cx="741.1" cy="697.9" r="3.0"/><circle cx="749.3" cy="670.3" r="3.0"/><circle cx="754.3" cy="693.3" r="3.0"/><circle cx="784.0" cy="718.0" r="3.0"/><circle cx="899.0" cy="615.6" r="3.0"/><circle cx="787.8" cy="713.8" r="3.0"/><circle cx="925.0" cy="619.6" r="3.0"/><circle cx="796.1" cy="719.5" r="3.0"/><circle cx="953.1" cy="697.4" r="3.0"/><circle cx="707.4" cy="621.9" r="3.0"/><circle cx="729.3" cy="677.9" r="3.0"/><circle cx="998.3" cy="673.5" r="3.0"/><circle cx="920.6" cy="642.8" r="3.0"/><circle cx="820.2" cy="743.6" r="3.0"/><circle cx="846.4" cy="731.3" r="3.0"/><circle cx="944.3" cy="681.3" r="3.0"/><circle cx="958.2" cy="693.3" r="3.0"/><circle cx="767.4" cy="707.7" r="3.0"/><circle cx="834.0" cy="738.3" r="3.0"/><circle cx="1065.6" cy="712.6" r="3.0"/><circle cx="809.0" cy="742.7" r="3.0"/><circle cx="738.6" cy="699.8" r="3.0"/><circle cx="856.1" cy="722.6" r="3.0"/><circle cx="1011.7" cy="658.1" r="3.0"/><circle cx="1066.9" cy="690.3" r="3.0"/><circle cx="943.1" cy="692.1" r="3.0"/><circle cx="720.3" cy="675.3" r="3.0"/><circle cx="1060.9" cy="754.2" r="3.0"/><circle cx="816.6" cy="728.0" r="3.0"/><circle cx="1032.1" cy="750.4" r="3.0"/><circle cx="988.2" cy="713.7" r="3.0"/><circle cx="779.3" cy="693.6" r="3.0"/><circle cx="992.4" cy="706.9" r="3.0"/><circle cx="862.6" cy="708.2" r="3.0"/><circle cx="861.7" cy="673.4" r="3.0"/><circle cx="1064.2" cy="722.3" r="3.0"/><circle cx="1030.6" cy="753.4" r="3.0"/><circle cx="857.0" cy="754.2" r="3.0"/><circle cx="831.5" cy="767.2" r="3.0"/><circle cx="753.7" cy="697.3" r="3.0"/><circle cx="803.3" cy="708.2" r="3.0"/><circle cx="814.6" cy="741.3" r="3.0"/><circle cx="730.9" cy="673.1" r="3.0"/><circle cx="724.7" cy="672.7" r="3.0"/><circle cx="1065.3" cy="670.2" r="3.0"/><circle cx="942.2" cy="684.2" r="3.0"/><circle cx="942.3" cy="665.8" r="3.0"/><circle cx="736.6" cy="677.6" r="3.0"/><circle cx="931.8" cy="658.6" r="3.0"/><circle cx="931.5" cy="644.3" r="3.0"/><circle cx="995.6" cy="715.4" r="3.0"/><circle cx="763.4" cy="684.9" r="3.0"/><circle cx="832.7" cy="754.1" r="3.0"/><circle cx="726.3" cy="635.2" r="3.0"/><circle cx="811.1" cy="730.0" r="3.0"/><circle cx="967.4" cy="694.3" r="3.0"/><circle cx="1030.4" cy="766.2" r="3.0"/><circle cx="941.7" cy="676.6" r="3.0"/><circle cx="805.8" cy="725.4" r="3.0"/><circle cx="752.5" cy="707.2" r="3.0"/><circle cx="1049.5" cy="729.7" r="3.0"/><circle cx="693.0" cy="661.1" r="3.0"/><circle cx="810.8" cy="733.4" r="3.0"/><circle cx="862.6" cy="728.0" r="3.0"/><circle cx="939.2" cy="674.6" r="3.0"/><circle cx="959.9" cy="699.8" r="3.0"/><circle cx="917.9" cy="629.7" r="3.0"/><circle cx="998.7" cy="728.5" r="3.0"/><circle cx="773.1" cy="728.1" r="3.0"/><circle cx="780.6" cy="705.5" r="3.0"/><circle cx="987.3" cy="703.9" r="3.0"/><circle cx="987.7" cy="726.1" r="3.0"/><circle cx="988.1" cy="717.4" r="3.0"/><circle cx="922.4" cy="648.6" r="3.0"/><circle cx="984.3" cy="723.9" r="3.0"/><circle cx="920.4" cy="604.7" r="3.0"/><circle cx="989.5" cy="735.4" r="3.0"/><circle cx="720.5" cy="648.2" r="3.0"/><circle cx="737.8" cy="676.6" r="3.0"/><circle cx="795.9" cy="727.7" r="3.0"/><circle cx="918.2" cy="616.9" r="3.0"/><circle cx="703.4" cy="592.9" r="3.0"/><circle cx="862.6" cy="722.9" r="3.0"/><circle cx="989.1" cy="717.0" r="3.0"/><circle cx="730.9" cy="645.7" r="3.0"/><circle cx="754.3" cy="677.3" r="3.0"/><circle cx="766.4" cy="712.9" r="3.0"/><circle cx="722.4" cy="649.7" r="3.0"/><circle cx="960.3" cy="669.1" r="3.0"/><circle cx="850.3" cy="711.8" r="3.0"/><circle cx="1065.0" cy="663.7" r="3.0"/><circle cx="687.2" cy="597.0" r="3.0"/><circle cx="752.2" cy="693.9" r="3.0"/><circle cx="918.3" cy="642.9" r="3.0"/><circle cx="992.1" cy="718.2" r="3.0"/><circle cx="703.0" cy="630.7" r="3.0"/><circle cx="812.3" cy="740.7" r="3.0"/><circle cx="741.0" cy="697.0" r="3.0"/><circle cx="999.6" cy="729.0" r="3.0"/><circle cx="786.5" cy="730.5" r="3.0"/><circle cx="970.1" cy="702.4" r="3.0"/><circle cx="714.4" cy="660.9" r="3.0"/><circle cx="688.7" cy="721.3" r="3.0"/><circle cx="1018.5" cy="752.8" r="3.0"/><circle cx="760.2" cy="716.0" r="3.0"/><circle cx="864.2" cy="716.5" r="3.0"/><circle cx="995.3" cy="715.9" r="3.0"/><circle cx="984.4" cy="678.9" r="3.0"/><circle cx="826.1" cy="766.3" r="3.0"/><circle cx="850.4" cy="722.3" r="3.0"/><circle cx="862.7" cy="682.1" r="3.0"/><circle cx="716.5" cy="604.7" r="3.0"/><circle cx="878.9" cy="624.1" r="3.0"/><circle cx="781.0" cy="716.0" r="3.0"/><circle cx="746.6" cy="711.9" r="3.0"/><circle cx="966.4" cy="714.7" r="3.0"/><circle cx="941.0" cy="672.1" r="3.0"/><circle cx="795.3" cy="709.7" r="3.0"/><circle cx="1000.8" cy="705.3" r="3.0"/><circle cx="1066.6" cy="695.9" r="3.0"/><circle cx="669.5" cy="637.1" r="3.0"/><circle cx="793.3" cy="729.1" r="3.0"/><circle cx="660.2" cy="725.5" r="3.0"/><circle cx="812.6" cy="753.4" r="3.0"/><circle cx="860.7" cy="673.7" r="3.0"/><circle cx="1067.8" cy="688.6" r="3.0"/><circle cx="761.2" cy="706.1" r="3.0"/><circle cx="808.2" cy="716.3" r="3.0"/><circle cx="1017.8" cy="664.9" r="3.0"/><circle cx="829.3" cy="742.4" r="3.0"/><circle cx="739.1" cy="689.4" r="3.0"/><circle cx="693.0" cy="730.4" r="3.0"/><circle cx="922.8" cy="633.8" r="3.0"/><circle cx="1035.4" cy="767.2" r="3.0"/><circle cx="764.1" cy="708.2" r="3.0"/><circle cx="1039.5" cy="743.0" r="3.0"/><circle cx="877.3" cy="651.7" r="3.0"/><circle cx="660.3" cy="716.5" r="3.0"/><circle cx="739.9" cy="700.2" r="3.0"/><circle cx="668.1" cy="754.9" r="3.0"/><circle cx="798.4" cy="695.2" r="3.0"/><circle cx="808.3" cy="741.7" r="3.0"/><circle cx="719.6" cy="667.6" r="3.0"/><circle cx="741.4" cy="688.9" r="3.0"/><circle cx="1065.7" cy="743.2" r="3.0"/><circle cx="771.4" cy="703.2" r="3.0"/><circle cx="696.5" cy="616.4" r="3.0"/><circle cx="912.2" cy="638.7" r="3.0"/><circle cx="957.8" cy="681.7" r="3.0"/><circle cx="825.7" cy="748.4" r="3.0"/><circle cx="982.0" cy="706.4" r="3.0"/><circle cx="904.3" cy="637.7" r="3.0"/><circle cx="770.0" cy="700.7" r="3.0"/><circle cx="720.7" cy="643.4" r="3.0"/><circle cx="956.4" cy="707.2" r="3.0"/><circle cx="675.8" cy="632.3" r="3.0"/><circle cx="821.9" cy="742.0" r="3.0"/><circle cx="833.6" cy="726.8" r="3.0"/><circle cx="872.0" cy="754.9" r="3.0"/><circle cx="995.6" cy="696.3" r="3.0"/><circle cx="684.7" cy="720.1" r="3.0"/><circle cx="1047.9" cy="721.9" r="3.0"/><circle cx="1006.8" cy="723.2" r="3.0"/><circle cx="707.6" cy="614.7" r="3.0"/><circle cx="990.4" cy="702.3" r="3.0"/><circle cx="862.9" cy="677.2" r="3.0"/><circle cx="894.7" cy="621.3" r="3.0"/><circle cx="1022.6" cy="759.5" r="3.0"/><circle cx="1065.7" cy="739.5" r="3.0"/><circle cx="992.2" cy="707.9" r="3.0"/><circle cx="688.7" cy="608.8" r="3.0"/><circle cx="958.6" cy="712.4" r="3.0"/><circle cx="863.2" cy="729.1" r="3.0"/><circle cx="924.8" cy="659.1" r="3.0"/><circle cx="1030.1" cy="741.6" r="3.0"/><circle cx="663.6" cy="704.9" r="3.0"/><circle cx="671.3" cy="653.6" r="3.0"/><circle cx="912.9" cy="661.9" r="3.0"/><circle cx="789.6" cy="702.5" r="3.0"/><circle cx="840.9" cy="723.1" r="3.0"/><circle cx="688.9" cy="605.7" r="3.0"/><circle cx="989.4" cy="697.4" r="3.0"/><circle cx="872.1" cy="766.3" r="3.0"/><circle cx="819.4" cy="741.3" r="3.0"/><circle cx="711.9" cy="654.7" r="3.0"/><circle cx="891.4" cy="656.0" r="3.0"/><circle cx="946.2" cy="673.7" r="3.0"/><circle cx="911.5" cy="614.7" r="3.0"/><circle cx="956.6" cy="678.8" r="3.0"/><circle cx="927.3" cy="677.2" r="3.0"/><circle cx="970.0" cy="687.4" r="3.0"/><circle cx="691.6" cy="582.2" r="3.0"/><circle cx="984.4" cy="751.5" r="3.0"/><circle cx="1048.2" cy="758.8" r="3.0"/><circle cx="928.3" cy="632.0" r="3.0"/><circle cx="986.3" cy="722.5" r="3.0"/><circle cx="994.9" cy="736.7" r="3.0"/><circle cx="1052.3" cy="737.1" r="3.0"/><circle cx="821.5" cy="757.3" r="3.0"/><circle cx="1014.4" cy="721.8" r="3.0"/><circle cx="756.8" cy="665.2" r="3.0"/><circle cx="708.4" cy="604.4" r="3.0"/><circle cx="780.5" cy="678.9" r="3.0"/><circle cx="864.9" cy="688.5" r="3.0"/><circle cx="989.1" cy="711.4" r="3.0"/><circle cx="728.2" cy="653.1" r="3.0"/><circle cx="921.1" cy="627.4" r="3.0"/><circle cx="768.1" cy="700.8" r="3.0"/><circle cx="966.2" cy="706.8" r="3.0"/><circle cx="863.9" cy="729.6" r="3.0"/><circle cx="788.3" cy="717.9" r="3.0"/><circle cx="742.5" cy="712.6" r="3.0"/><circle cx="718.7" cy="595.8" r="3.0"/><circle cx="736.6" cy="679.2" r="3.0"/><circle cx="792.1" cy="719.2" r="3.0"/><circle cx="799.5" cy="711.7" r="3.0"/><circle cx="791.8" cy="715.6" r="3.0"/><circle cx="784.7" cy="716.1" r="3.0"/><circle cx="867.7" cy="712.5" r="3.0"/><circle cx="1026.7" cy="763.1" r="3.0"/><circle cx="695.0" cy="618.5" r="3.0"/><circle cx="951.4" cy="682.7" r="3.0"/><circle cx="839.8" cy="736.5" r="3.0"/><circle cx="847.8" cy="728.4" r="3.0"/><circle cx="758.3" cy="671.1" r="3.0"/><circle cx="898.1" cy="736.1" r="3.0"/><circle cx="861.8" cy="685.7" r="3.0"/><circle cx="812.3" cy="728.2" r="3.0"/><circle cx="948.7" cy="664.4" r="3.0"/><circle cx="1046.8" cy="751.8" r="3.0"/><circle cx="971.5" cy="698.5" r="3.0"/><circle cx="1065.6" cy="760.5" r="3.0"/><circle cx="797.2" cy="686.0" r="3.0"/><circle cx="960.1" cy="766.6" r="3.0"/><circle cx="940.2" cy="665.9" r="3.0"/><circle cx="1003.1" cy="726.3" r="3.0"/><circle cx="754.0" cy="713.5" r="3.0"/><circle cx="780.5" cy="755.9" r="3.0"/><circle cx="695.4" cy="629.5" r="3.0"/><circle cx="666.8" cy="649.8" r="3.0"/><circle cx="726.6" cy="651.3" r="3.0"/><circle cx="710.1" cy="605.0" r="3.0"/><circle cx="924.1" cy="640.8" r="3.0"/><circle cx="962.2" cy="671.1" r="3.0"/><circle cx="799.9" cy="663.7" r="3.0"/><circle cx="819.6" cy="737.5" r="3.0"/><circle cx="1045.4" cy="738.1" r="3.0"/><circle cx="914.6" cy="645.7" r="3.0"/><circle cx="984.5" cy="705.5" r="3.0"/><circle cx="1068.8" cy="688.5" r="3.0"/><circle cx="780.2" cy="733.6" r="3.0"/><circle cx="818.3" cy="738.9" r="3.0"/><circle cx="737.9" cy="675.3" r="3.0"/><circle cx="982.4" cy="720.9" r="3.0"/><circle cx="760.8" cy="672.7" r="3.0"/><circle cx="947.2" cy="679.2" r="3.0"/><circle cx="1004.7" cy="709.3" r="3.0"/><circle cx="725.5" cy="653.2" r="3.0"/><circle cx="861.7" cy="736.9" r="3.0"/><circle cx="985.9" cy="707.7" r="3.0"/><circle cx="1041.4" cy="749.2" r="3.0"/><circle cx="819.7" cy="745.4" r="3.0"/><circle cx="747.8" cy="716.1" r="3.0"/><circle cx="976.5" cy="716.8" r="3.0"/><circle cx="663.0" cy="728.4" r="3.0"/><circle cx="659.4" cy="715.0" r="3.0"/><circle cx="757.9" cy="681.3" r="3.0"/><circle cx="825.1" cy="759.8" r="3.0"/><circle cx="1018.0" cy="725.7" r="3.0"/><circle cx="739.4" cy="694.8" r="3.0"/><circle cx="856.6" cy="706.3" r="3.0"/><circle cx="1016.2" cy="740.7" r="3.0"/><circle cx="801.3" cy="753.3" r="3.0"/><circle cx="985.5" cy="716.1" r="3.0"/><circle cx="683.3" cy="610.1" r="3.0"/><circle cx="989.5" cy="724.1" r="3.0"/><circle cx="1014.7" cy="733.4" r="3.0"/><circle cx="727.4" cy="678.3" r="3.0"/><circle cx="895.5" cy="582.2" r="3.0"/><circle cx="698.9" cy="633.9" r="3.0"/><circle cx="1060.0" cy="722.6" r="3.0"/><circle cx="954.6" cy="706.7" r="3.0"/><circle cx="678.2" cy="640.8" r="3.0"/><circle cx="964.3" cy="686.0" r="3.0"/><circle cx="972.5" cy="717.8" r="3.0"/><circle cx="957.6" cy="689.4" r="3.0"/><circle cx="1009.3" cy="681.8" r="3.0"/><circle cx="889.7" cy="603.6" r="3.0"/><circle cx="979.8" cy="714.1" r="3.0"/><circle cx="686.1" cy="649.8" r="3.0"/><circle cx="934.7" cy="656.8" r="3.0"/><circle cx="871.8" cy="664.8" r="3.0"/><circle cx="943.8" cy="700.2" r="3.0"/><circle cx="698.5" cy="750.9" r="3.0"/><circle cx="749.9" cy="697.1" r="3.0"/><circle cx="707.6" cy="635.1" r="3.0"/><circle cx="968.0" cy="707.7" r="3.0"/><circle cx="785.2" cy="717.0" r="3.0"/><circle cx="892.8" cy="605.7" r="3.0"/><circle cx="955.6" cy="689.2" r="3.0"/><circle cx="1035.8" cy="734.9" r="3.0"/><circle cx="860.5" cy="681.0" r="3.0"/><circle cx="740.4" cy="681.3" r="3.0"/><circle cx="726.4" cy="662.2" r="3.0"/><circle cx="1030.5" cy="755.6" r="3.0"/><circle cx="1003.0" cy="715.5" r="3.0"/><circle cx="946.3" cy="685.0" r="3.0"/><circle cx="953.0" cy="723.4" r="3.0"/><circle cx="994.4" cy="720.0" r="3.0"/><circle cx="1066.8" cy="677.2" r="3.0"/><circle cx="770.4" cy="706.0" r="3.0"/><circle cx="962.8" cy="711.3" r="3.0"/><circle cx="901.1" cy="607.4" r="3.0"/><circle cx="769.9" cy="711.8" r="3.0"/><circle cx="828.2" cy="750.4" r="3.0"/><circle cx="896.8" cy="574.8" r="3.0"/><circle cx="947.3" cy="677.3" r="3.0"/><circle cx="953.8" cy="697.1" r="3.0"/><circle cx="785.5" cy="697.4" r="3.0"/><circle cx="1020.9" cy="739.3" r="3.0"/><circle cx="840.4" cy="767.2" r="3.0"/><circle cx="862.8" cy="717.2" r="3.0"/><circle cx="1020.0" cy="740.9" r="3.0"/><circle cx="771.1" cy="704.8" r="3.0"/><circle cx="761.8" cy="699.2" r="3.0"/><circle cx="826.6" cy="755.6" r="3.0"/><circle cx="766.2" cy="702.4" r="3.0"/><circle cx="767.5" cy="701.3" r="3.0"/><circle cx="1007.6" cy="724.2" r="3.0"/><circle cx="1029.9" cy="755.4" r="3.0"/><circle cx="1066.6" cy="682.1" r="3.0"/><circle cx="833.3" cy="752.4" r="3.0"/><circle cx="808.2" cy="719.3" r="3.0"/><circle cx="681.4" cy="615.1" r="3.0"/><circle cx="664.3" cy="752.5" r="3.0"/><circle cx="743.3" cy="679.2" r="3.0"/><circle cx="665.2" cy="711.1" r="3.0"/><circle cx="923.2" cy="643.8" r="3.0"/><circle cx="1010.1" cy="734.8" r="3.0"/><circle cx="812.3" cy="746.0" r="3.0"/><circle cx="790.5" cy="720.0" r="3.0"/><circle cx="867.8" cy="672.7" r="3.0"/><circle cx="973.8" cy="711.8" r="3.0"/><circle cx="854.9" cy="714.1" r="3.0"/><circle cx="1044.3" cy="758.1" r="3.0"/><circle cx="792.1" cy="714.0" r="3.0"/><circle cx="967.2" cy="693.7" r="3.0"/><circle cx="958.6" cy="671.1" r="3.0"/><circle cx="739.2" cy="692.1" r="3.0"/><circle cx="705.1" cy="646.4" r="3.0"/><circle cx="834.7" cy="761.5" r="3.0"/><circle cx="975.9" cy="695.1" r="3.0"/><circle cx="952.4" cy="711.4" r="3.0"/><circle cx="792.5" cy="713.8" r="3.0"/><circle cx="949.2" cy="670.4" r="3.0"/><circle cx="822.8" cy="763.1" r="3.0"/><circle cx="921.9" cy="620.2" r="3.0"/><circle cx="808.7" cy="726.9" r="3.0"/><circle cx="970.3" cy="712.9" r="3.0"/><circle cx="1024.4" cy="755.5" r="3.0"/><circle cx="782.0" cy="707.7" r="3.0"/><circle cx="903.4" cy="632.6" r="3.0"/><circle cx="1029.9" cy="735.2" r="3.0"/><circle cx="884.6" cy="618.0" r="3.0"/><circle cx="830.0" cy="733.9" r="3.0"/><circle cx="829.9" cy="745.5" r="3.0"/><circle cx="938.9" cy="674.8" r="3.0"/><circle cx="725.3" cy="657.2" r="3.0"/><circle cx="727.6" cy="644.3" r="3.0"/><circle cx="751.5" cy="701.9" r="3.0"/><circle cx="933.1" cy="646.5" r="3.0"/><circle cx="738.6" cy="687.1" r="3.0"/><circle cx="1021.9" cy="747.9" r="3.0"/><circle cx="741.4" cy="664.9" r="3.0"/><circle cx="974.3" cy="706.0" r="3.0"/><circle cx="820.5" cy="755.5" r="3.0"/><circle cx="745.3" cy="670.4" r="3.0"/><circle cx="785.6" cy="724.4" r="3.0"/><circle cx="853.2" cy="674.9" r="3.0"/><circle cx="1000.8" cy="707.5" r="3.0"/><circle cx="1064.3" cy="689.8" r="3.0"/><circle cx="860.4" cy="689.8" r="3.0"/><circle cx="714.6" cy="630.1" r="3.0"/><circle cx="979.2" cy="731.9" r="3.0"/><circle cx="732.8" cy="656.6" r="3.0"/><circle cx="692.9" cy="574.8" r="3.0"/><circle cx="749.1" cy="723.4" r="3.0"/><circle cx="925.9" cy="671.8" r="3.0"/><circle cx="799.2" cy="726.3" r="3.0"/><circle cx="982.6" cy="704.5" r="3.0"/><circle cx="915.4" cy="656.1" r="3.0"/><circle cx="733.0" cy="677.9" r="3.0"/><circle cx="1036.6" cy="754.1" r="3.0"/><circle cx="1030.0" cy="766.3" r="3.0"/><circle cx="984.1" cy="733.6" r="3.0"/><circle cx="893.7" cy="577.2" r="3.0"/><circle cx="1012.8" cy="711.3" r="3.0"/><circle cx="869.5" cy="694.9" r="3.0"/><circle cx="698.3" cy="586.1" r="3.0"/><circle cx="778.3" cy="716.2" r="3.0"/><circle cx="916.9" cy="651.7" r="3.0"/><circle cx="840.6" cy="743.1" r="3.0"/><circle cx="970.4" cy="686.7" r="3.0"/><circle cx="840.5" cy="726.4" r="3.0"/><circle cx="996.4" cy="713.8" r="3.0"/><circle cx="893.1" cy="607.0" r="3.0"/><circle cx="1001.1" cy="661.4" r="3.0"/><circle cx="861.1" cy="663.7" r="3.0"/><circle cx="811.1" cy="670.0" r="3.0"/><circle cx="1067.8" cy="729.6" r="3.0"/><circle cx="879.7" cy="632.3" r="3.0"/><circle cx="699.5" cy="632.6" r="3.0"/><circle cx="992.3" cy="724.4" r="3.0"/><circle cx="668.0" cy="728.2" r="3.0"/><circle cx="948.0" cy="680.5" r="3.0"/><circle cx="702.9" cy="611.6" r="3.0"/><circle cx="791.5" cy="763.4" r="3.0"/><circle cx="921.3" cy="637.4" r="3.0"/><circle cx="771.4" cy="703.6" r="3.0"/><circle cx="786.9" cy="734.8" r="3.0"/><circle cx="838.2" cy="724.8" r="3.0"/><circle cx="1028.4" cy="740.4" r="3.0"/><circle cx="1057.1" cy="674.9" r="3.0"/><circle cx="956.5" cy="718.4" r="3.0"/><circle cx="911.3" cy="621.9" r="3.0"/><circle cx="776.0" cy="691.6" r="3.0"/><circle cx="718.0" cy="620.2" r="3.0"/><circle cx="821.8" cy="745.3" r="3.0"/><circle cx="922.0" cy="634.8" r="3.0"/><circle cx="1066.5" cy="722.9" r="3.0"/><circle cx="834.4" cy="747.9" r="3.0"/><circle cx="824.8" cy="747.1" r="3.0"/><circle cx="731.8" cy="665.4" r="3.0"/><circle cx="670.5" cy="767.2" r="3.0"/><circle cx="826.4" cy="733.4" r="3.0"/><circle cx="979.9" cy="691.6" r="3.0"/><circle cx="860.0" cy="668.1" r="3.0"/><circle cx="868.9" cy="713.4" r="3.0"/><circle cx="932.1" cy="653.1" r="3.0"/><circle cx="993.5" cy="702.5" r="3.0"/><circle cx="815.0" cy="738.7" r="3.0"/><circle cx="847.0" cy="714.2" r="3.0"/><circle cx="861.8" cy="739.5" r="3.0"/><circle cx="668.2" cy="740.5" r="3.0"/><circle cx="738.0" cy="660.4" r="3.0"/><circle cx="689.8" cy="577.2" r="3.0"/><circle cx="956.6" cy="705.0" r="3.0"/><circle cx="803.5" cy="728.4" r="3.0"/><circle cx="756.0" cy="699.8" r="3.0"/><circle cx="1025.6" cy="732.4" r="3.0"/><circle cx="1065.2" cy="698.8" r="3.0"/><circle cx="995.3" cy="736.8" r="3.0"/><circle cx="1018.5" cy="741.3" r="3.0"/><circle cx="791.4" cy="715.9" r="3.0"/><circle cx="750.6" cy="695.7" r="3.0"/><circle cx="750.8" cy="713.7" r="3.0"/><circle cx="756.3" cy="697.1" r="3.0"/><circle cx="995.7" cy="715.6" r="3.0"/><circle cx="786.5" cy="705.1" r="3.0"/><circle cx="961.1" cy="719.0" r="3.0"/><circle cx="766.5" cy="686.7" r="3.0"/><circle cx="986.6" cy="712.6" r="3.0"/><circle cx="996.0" cy="714.0" r="3.0"/><circle cx="720.2" cy="640.8" r="3.0"/><circle cx="1054.2" cy="711.8" r="3.0"/><circle cx="888.7" cy="593.4" r="3.0"/><circle cx="756.0" cy="691.5" r="3.0"/><circle cx="896.9" cy="577.3" r="3.0"/><circle cx="794.4" cy="731.0" r="3.0"/><circle cx="1018.9" cy="738.7" r="3.0"/><circle cx="922.9" cy="657.8" r="3.0"/><circle cx="1003.2" cy="738.8" r="3.0"/><circle cx="1037.9" cy="738.3" r="3.0"/><circle cx="757.0" cy="679.0" r="3.0"/><circle cx="1059.6" cy="738.9" r="3.0"/><circle cx="826.2" cy="741.6" r="3.0"/><circle cx="895.3" cy="597.0" r="3.0"/><circle cx="890.0" cy="649.8" r="3.0"/><circle cx="748.1" cy="686.9" r="3.0"/><circle cx="861.8" cy="678.2" r="3.0"/><circle cx="1012.1" cy="719.3" r="3.0"/><circle cx="729.3" cy="652.8" r="3.0"/><circle cx="795.7" cy="729.0" r="3.0"/><circle cx="802.1" cy="732.1" r="3.0"/><circle cx="661.0" cy="688.5" r="3.0"/><circle cx="818.0" cy="747.9" r="3.0"/><circle cx="1000.1" cy="729.1" r="3.0"/><circle cx="1018.8" cy="734.1" r="3.0"/><circle cx="941.9" cy="660.4" r="3.0"/><circle cx="691.6" cy="766.6" r="3.0"/><circle cx="944.9" cy="697.0" r="3.0"/><circle cx="707.1" cy="657.8" r="3.0"/><circle cx="734.6" cy="659.8" r="3.0"/><circle cx="796.9" cy="707.5" r="3.0"/><circle cx="673.8" cy="640.7" r="3.0"/><circle cx="973.9" cy="700.7" r="3.0"/><circle cx="801.4" cy="714.8" r="3.0"/><circle cx="714.8" cy="610.9" r="3.0"/><circle cx="665.0" cy="659.7" r="3.0"/><circle cx="1003.8" cy="663.7" r="3.0"/><circle cx="747.5" cy="682.7" r="3.0"/><circle cx="776.1" cy="711.9" r="3.0"/><circle cx="665.9" cy="659.6" r="3.0"/><circle cx="999.8" cy="718.7" r="3.0"/><circle cx="864.4" cy="708.9" r="3.0"/><circle cx="772.0" cy="695.1" r="3.0"/><circle cx="694.2" cy="763.1" r="3.0"/><circle cx="1061.6" cy="700.0" r="3.0"/><circle cx="911.5" cy="611.1" r="3.0"/><circle cx="663.6" cy="711.5" r="3.0"/><circle cx="785.6" cy="735.4" r="3.0"/><circle cx="723.4" cy="677.2" r="3.0"/><circle cx="923.5" cy="667.6" r="3.0"/><circle cx="1009.7" cy="725.4" r="3.0"/><circle cx="712.4" cy="633.4" r="3.0"/><circle cx="807.2" cy="725.9" r="3.0"/><circle cx="1068.0" cy="665.6" r="3.0"/><circle cx="809.6" cy="662.3" r="3.0"/><circle cx="1011.1" cy="725.9" r="3.0"/><circle cx="712.2" cy="624.9" r="3.0"/><circle cx="989.5" cy="714.0" r="3.0"/><circle cx="1020.1" cy="758.5" r="3.0"/><circle cx="716.7" cy="642.8" r="3.0"/><circle cx="814.1" cy="725.7" r="3.0"/><circle cx="1056.6" cy="673.0" r="3.0"/><circle cx="936.1" cy="684.9" r="3.0"/><circle cx="1044.4" cy="726.4" r="3.0"/><circle cx="709.3" cy="609.1" r="3.0"/><circle cx="807.5" cy="728.7" r="3.0"/><circle cx="922.6" cy="595.8" r="3.0"/><circle cx="782.4" cy="722.5" r="3.0"/><circle cx="824.4" cy="749.6" r="3.0"/><circle cx="903.6" cy="575.7" r="3.0"/><circle cx="892.6" cy="608.8" r="3.0"/><circle cx="763.5" cy="694.3" r="3.0"/><circle cx="762.2" cy="681.9" r="3.0"/><circle cx="758.7" cy="707.4" r="3.0"/><circle cx="940.6" cy="666.7" r="3.0"/><circle cx="714.7" cy="640.1" r="3.0"/><circle cx="941.0" cy="645.9" r="3.0"/><circle cx="943.0" cy="689.4" r="3.0"/><circle cx="868.9" cy="659.7" r="3.0"/><circle cx="944.0" cy="729.3" r="3.0"/><circle cx="802.9" cy="723.2" r="3.0"/><circle cx="834.1" cy="751.9" r="3.0"/><circle cx="956.4" cy="667.7" r="3.0"/><circle cx="898.1" cy="763.1" r="3.0"/><circle cx="959.9" cy="691.5" r="3.0"/><circle cx="927.7" cy="628.0" r="3.0"/><circle cx="1055.8" cy="713.0" r="3.0"/><circle cx="728.8" cy="646.0" r="3.0"/><circle cx="870.8" cy="748.5" r="3.0"/><circle cx="1038.6" cy="761.5" r="3.0"/><circle cx="1065.9" cy="676.6" r="3.0"/><circle cx="698.7" cy="586.5" r="3.0"/><circle cx="1032.7" cy="753.9" r="3.0"/><circle cx="983.7" cy="724.5" r="3.0"/><circle cx="1039.1" cy="739.6" r="3.0"/><circle cx="930.2" cy="654.3" r="3.0"/><circle cx="730.3" cy="635.4" r="3.0"/><circle cx="971.4" cy="701.3" r="3.0"/><circle cx="1044.8" cy="723.1" r="3.0"/><circle cx="697.7" cy="675.0" r="3.0"/><circle cx="692.3" cy="585.2" r="3.0"/><circle cx="940.5" cy="677.6" r="3.0"/><circle cx="826.0" cy="735.2" r="3.0"/><circle cx="958.6" cy="711.8" r="3.0"/><circle cx="772.0" cy="714.7" r="3.0"/><circle cx="686.1" cy="726.3" r="3.0"/><circle cx="774.2" cy="705.7" r="3.0"/><circle cx="918.1" cy="613.8" r="3.0"/><circle cx="957.9" cy="713.5" r="3.0"/><circle cx="1007.4" cy="728.4" r="3.0"/><circle cx="738.8" cy="696.8" r="3.0"/><circle cx="665.6" cy="694.9" r="3.0"/><circle cx="692.1" cy="610.0" r="3.0"/><circle cx="750.7" cy="706.7" r="3.0"/><circle cx="955.4" cy="701.9" r="3.0"/><circle cx="977.5" cy="708.7" r="3.0"/><circle cx="1002.8" cy="699.3" r="3.0"/><circle cx="1065.4" cy="721.4" r="3.0"/><circle cx="1023.5" cy="737.5" r="3.0"/><circle cx="952.0" cy="686.9" r="3.0"/><circle cx="867.5" cy="704.9" r="3.0"/><circle cx="758.3" cy="704.9" r="3.0"/><circle cx="908.1" cy="597.0" r="3.0"/><circle cx="864.8" cy="767.2" r="3.0"/><circle cx="753.9" cy="681.7" r="3.0"/><circle cx="965.7" cy="699.2" r="3.0"/><circle cx="942.2" cy="690.3" r="3.0"/><circle cx="987.2" cy="674.7" r="3.0"/><circle cx="918.6" cy="640.1" r="3.0"/><circle cx="972.7" cy="714.0" r="3.0"/><circle cx="1012.6" cy="726.9" r="3.0"/><circle cx="1000.0" cy="719.5" r="3.0"/><circle cx="1056.6" cy="727.9" r="3.0"/><circle cx="855.9" cy="715.0" r="3.0"/><circle cx="805.4" cy="681.8" r="3.0"/><circle cx="872.9" cy="732.7" r="3.0"/><circle cx="862.9" cy="700.5" r="3.0"/><circle cx="943.3" cy="694.8" r="3.0"/><circle cx="791.7" cy="727.4" r="3.0"/><circle cx="928.5" cy="653.9" r="3.0"/><circle cx="902.6" cy="586.5" r="3.0"/><circle cx="892.3" cy="601.1" r="3.0"/><circle cx="936.9" cy="677.9" r="3.0"/><circle cx="685.8" cy="603.6" r="3.0"/><circle cx="857.0" cy="738.1" r="3.0"/><circle cx="762.3" cy="706.8" r="3.0"/><circle cx="864.1" cy="665.6" r="3.0"/><circle cx="721.1" cy="659.3" r="3.0"/><circle cx="840.4" cy="758.1" r="3.0"/><circle cx="660.0" cy="688.6" r="3.0"/><circle cx="840.3" cy="750.4" r="3.0"/><circle cx="1068.0" cy="725.5" r="3.0"/><circle cx="899.6" cy="713.8" r="3.0"/><circle cx="796.9" cy="705.3" r="3.0"/><circle cx="915.8" cy="654.7" r="3.0"/><circle cx="996.0" cy="719.2" r="3.0"/><circle cx="933.8" cy="696.6" r="3.0"/><circle cx="1038.0" cy="751.9" r="3.0"/><circle cx="778.1" cy="717.4" r="3.0"/><circle cx="816.7" cy="748.3" r="3.0"/><circle cx="794.1" cy="723.8" r="3.0"/><circle cx="852.7" cy="727.9" r="3.0"/><circle cx="990.0" cy="713.8" r="3.0"/><circle cx="720.9" cy="659.1" r="3.0"/><circle cx="719.6" cy="617.9" r="3.0"/><circle cx="785.8" cy="725.9" r="3.0"/><circle cx="738.3" cy="684.2" r="3.0"/><circle cx="778.7" cy="704.5" r="3.0"/><circle cx="935.7" cy="653.7" r="3.0"/><circle cx="899.0" cy="622.1" r="3.0"/><circle cx="986.3" cy="707.5" r="3.0"/><circle cx="1033.8" cy="745.5" r="3.0"/><circle cx="746.0" cy="717.4" r="3.0"/><circle cx="1065.7" cy="678.2" r="3.0"/><circle cx="962.7" cy="719.6" r="3.0"/><circle cx="718.5" cy="648.6" r="3.0"/><circle cx="745.1" cy="692.0" r="3.0"/><circle cx="785.8" cy="723.0" r="3.0"/><circle cx="1050.3" cy="731.3" r="3.0"/><circle cx="945.7" cy="658.3" r="3.0"/><circle cx="1044.5" cy="743.1" r="3.0"/><circle cx="699.7" cy="575.7" r="3.0"/><circle cx="989.8" cy="727.1" r="3.0"/><circle cx="950.8" cy="704.8" r="3.0"/><circle cx="941.4" cy="673.9" r="3.0"/><circle cx="672.3" cy="631.1" r="3.0"/><circle cx="701.3" cy="598.8" r="3.0"/><circle cx="979.6" cy="718.0" r="3.0"/><circle cx="982.2" cy="709.2" r="3.0"/><circle cx="666.9" cy="748.5" r="3.0"/><circle cx="773.0" cy="696.1" r="3.0"/><circle cx="692.4" cy="589.9" r="3.0"/><circle cx="989.8" cy="706.4" r="3.0"/><circle cx="869.7" cy="700.4" r="3.0"/><circle cx="665.8" cy="700.4" r="3.0"/><circle cx="777.4" cy="710.9" r="3.0"/><circle cx="716.2" cy="654.1" r="3.0"/><circle cx="752.7" cy="678.8" r="3.0"/><circle cx="993.8" cy="725.1" r="3.0"/><circle cx="825.3" cy="741.4" r="3.0"/><circle cx="785.9" cy="727.1" r="3.0"/><circle cx="785.6" cy="714.8" r="3.0"/><circle cx="966.1" cy="696.6" r="3.0"/><circle cx="930.3" cy="662.2" r="3.0"/><circle cx="1022.7" cy="751.0" r="3.0"/><circle cx="955.2" cy="715.4" r="3.0"/><circle cx="936.5" cy="684.6" r="3.0"/><circle cx="1029.6" cy="748.4" r="3.0"/><circle cx="736.7" cy="666.7" r="3.0"/><circle cx="835.0" cy="756.8" r="3.0"/><circle cx="942.1" cy="686.5" r="3.0"/><circle cx="735.0" cy="674.8" r="3.0"/><circle cx="861.7" cy="695.8" r="3.0"/><circle cx="667.9" cy="664.8" r="3.0"/><circle cx="697.9" cy="588.7" r="3.0"/><circle cx="768.8" cy="714.0" r="3.0"/><circle cx="1057.1" cy="695.4" r="3.0"/><circle cx="700.4" cy="683.9" r="3.0"/><circle cx="840.7" cy="740.3" r="3.0"/><circle cx="791.0" cy="736.7" r="3.0"/><circle cx="846.0" cy="756.3" r="3.0"/><circle cx="857.7" cy="700.0" r="3.0"/><circle cx="718.1" cy="634.8" r="3.0"/><circle cx="1002.3" cy="695.2" r="3.0"/><circle cx="969.2" cy="706.3" r="3.0"/><circle cx="758.3" cy="740.2" r="3.0"/><circle cx="999.8" cy="727.7" r="3.0"/><circle cx="870.7" cy="649.8" r="3.0"/><circle cx="1001.1" cy="686.0" r="3.0"/><circle cx="1009.3" cy="761.9" r="3.0"/><circle cx="1065.6" cy="673.4" r="3.0"/><circle cx="1068.1" cy="716.5" r="3.0"/><circle cx="707.6" cy="611.1" r="3.0"/><circle cx="775.3" cy="731.9" r="3.0"/><circle cx="823.0" cy="734.0" r="3.0"/><circle cx="826.0" cy="755.4" r="3.0"/><circle cx="663.8" cy="712.5" r="3.0"/><circle cx="901.6" cy="675.0" r="3.0"/><circle cx="778.0" cy="708.6" r="3.0"/><circle cx="785.6" cy="714.0" r="3.0"/><circle cx="770.5" cy="690.6" r="3.0"/><circle cx="696.5" cy="755.6" r="3.0"/><circle cx="861.7" cy="712.6" r="3.0"/><circle cx="760.4" cy="686.0" r="3.0"/><circle cx="960.9" cy="679.0" r="3.0"/><circle cx="722.0" cy="671.8" r="3.0"/><circle cx="704.4" cy="630.0" r="3.0"/><circle cx="743.4" cy="677.3" r="3.0"/><circle cx="785.4" cy="733.4" r="3.0"/><circle cx="824.5" cy="740.4" r="3.0"/><circle cx="888.5" cy="612.0" r="3.0"/><circle cx="808.9" cy="711.3" r="3.0"/><circle cx="932.7" cy="662.9" r="3.0"/></g><rect x="619.5" y="555.5" width="491" height="231" fill="none" stroke="#fafafa" stroke-width="1"/><rect x="620.5" y="556.5" width="489" height="229" fill="none" stroke="#000" stroke-width="1.25"/><text transform="translate(591.9 604.1) scale(0.89 1)" text-anchor="start" font-size="12" font-weight="normal" fill="#000" >-0.4</text><text transform="translate(591.9 663.3000000000001) scale(0.89 1)" text-anchor="start" font-size="12" font-weight="normal" fill="#000" >-0.2</text><text transform="translate(597.5 722.5) scale(0.89 1)" text-anchor="start" font-size="12" font-weight="normal" fill="#000" >0.0</text><text transform="translate(591.9 781.8000000000001) scale(0.89 1)" text-anchor="start" font-size="12" font-weight="normal" fill="#000" >+0.2</text><text transform="translate(660.5 799) scale(0.89 1)" text-anchor="middle" font-size="12" font-weight="normal" fill="#000" >0.0</text><text transform="translate(762.45 799) scale(0.89 1)" text-anchor="middle" font-size="12" font-weight="normal" fill="#000" >0.5</text><text transform="translate(864.4 799) scale(0.89 1)" text-anchor="middle" font-size="12" font-weight="normal" fill="#000" >1.0</text><text transform="translate(966.35 799) scale(0.89 1)" text-anchor="middle" font-size="12" font-weight="normal" fill="#000" >1.5</text><text transform="translate(1068.3 799) scale(0.89 1)" text-anchor="middle" font-size="12" font-weight="normal" fill="#000" >2.0</text><text transform="translate(622.5 812) scale(0.89 1)" text-anchor="start" font-size="12" font-weight="normal" fill="#000" >Phase</text><text transform="translate(1109 812) scale(0.89 1)" text-anchor="end" font-size="12" font-weight="normal" fill="#1a1aff" >[-0.1314, -0.4807]</text><text transform="translate(582 672.3) rotate(-90)" font-size="10.2" stroke="#000" stroke-width="0.35">Mag</text></svg>
</body></html>
